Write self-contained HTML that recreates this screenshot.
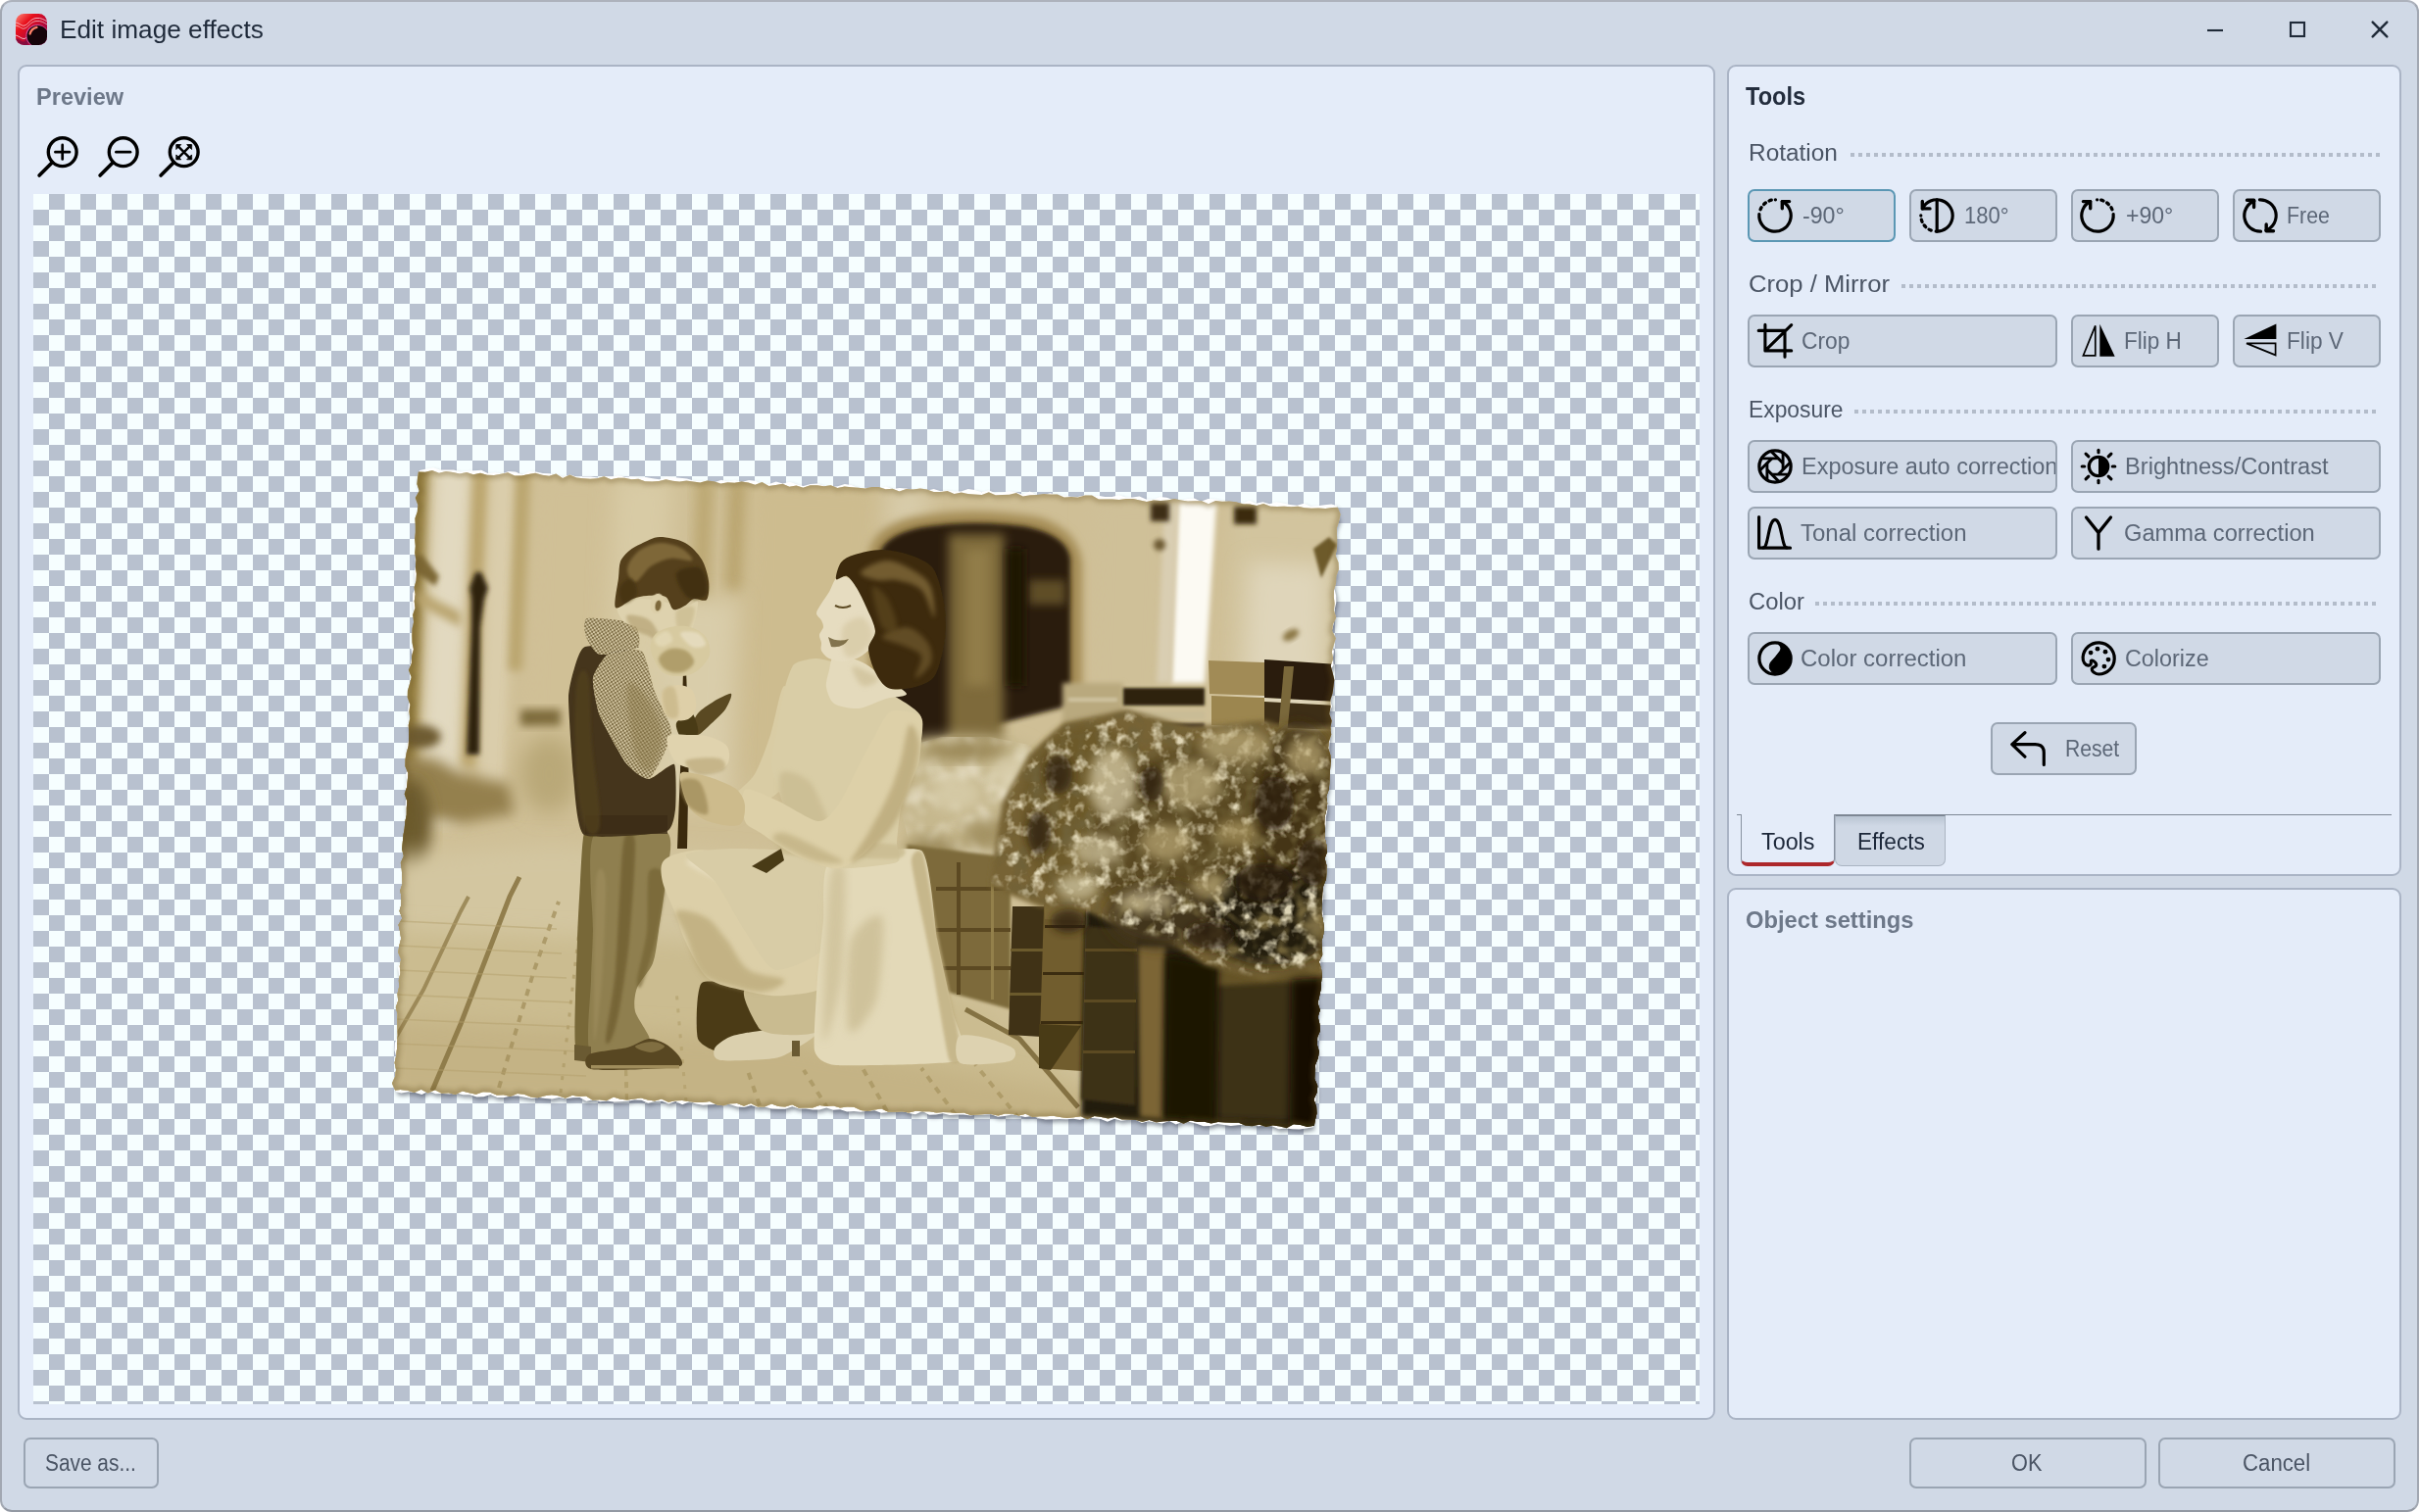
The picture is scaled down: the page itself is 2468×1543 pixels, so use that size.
<!DOCTYPE html>
<html><head><meta charset="utf-8"><title>Edit image effects</title>
<style>
html,body{margin:0;padding:0;background:#fff;}
body{width:2468px;height:1543px;position:relative;overflow:hidden;font-family:"Liberation Sans",sans-serif;}
.a{position:absolute;box-sizing:border-box;}
.t{position:absolute;white-space:nowrap;line-height:1;transform-origin:0 50%;}
#win{left:0;top:0;width:2468px;height:1543px;background:#d0d9e6;border-radius:12px;border:2px solid #a2a8b2;border-top-color:#adb2bc;border-bottom-color:#9399a3;overflow:hidden;}
.panel{background:#e4ecf9;border:2px solid #aab4c5;border-radius:9px;}
.btn{background:#d0d9e6;border:2px solid #9aa5b3;border-radius:7px;overflow:hidden;}
.btn.focus{border-color:#5b97b4;}
.dots{height:4px;background:repeating-linear-gradient(90deg,#b3bcca 0 4px,transparent 4px 8px);}
#checker{left:34px;top:198px;width:1700px;height:1235px;background:repeating-conic-gradient(#b8c1cf 0 25%,#f6feff 0 50%) 0 0/32px 32px;overflow:hidden;}
svg{position:absolute;overflow:visible;}
</style></head>
<body>
<div class="a" id="win"></div>
<svg style="left:16px;top:14px" width="32" height="32" viewBox="0 0 32 32"><defs><linearGradient id="ig" x1="0" y1="0" x2="1" y2="1"><stop offset="0" stop-color="#ff8a7a"/><stop offset="0.3" stop-color="#e8101c"/><stop offset="0.65" stop-color="#b00a3c"/><stop offset="1" stop-color="#6a0a3a"/></linearGradient><clipPath id="ic"><rect x="0" y="0" width="32" height="32" rx="8.5"/></clipPath></defs><g clip-path="url(#ic)"><rect width="32" height="32" fill="url(#ig)"/><path d="M0 9C5 10 6 13 9 12C13 11 15 5 21 4.5C26 4 29 6 32 8" fill="none" stroke="#ffd0d8" stroke-width="0.9" opacity="0.9"/><path d="M0 12C5 13 6 16 9 15C13 14 15 8 21 7.5C26 7 29 9 32 11" fill="none" stroke="#fff" stroke-width="0.8" opacity="0.7"/><path d="M0 22C4 23 6 26 9 25.5C11 25 12 23 13 21" fill="none" stroke="#ffe0e8" stroke-width="0.9" opacity="0.9"/><path d="M0 25C4 26 6 29 9 28.5L13 24L12 32H0Z" fill="#7a0d40" opacity="0.8"/><circle cx="22" cy="22.5" r="11.6" fill="#d84a98"/><circle cx="22.4" cy="22.8" r="10.9" fill="#16040a"/><path d="M14.6 20.5C15.5 17 18 14.6 21.5 13.8" fill="none" stroke="#ff8068" stroke-width="2.3" stroke-linecap="round"/></g></svg>
<span class="t" id="title" style="left:60.60px;top:17.40px;font-size:26.45px;color:#1f2a3a;transform:scaleX(0.9911);">Edit image effects</span>
<svg style="left:2240px;top:15px" width="210" height="32" viewBox="2240 15 210 32"><g stroke="#1f2a38" stroke-width="2.1" fill="none"><path d="M2252 31H2268" /><rect x="2337" y="23" width="14" height="14"/><path d="M2420.7 22.7L2435.3 37.3M2435.3 22.7L2420.7 37.3" stroke-linecap="round" stroke-width="2.5"/></g></svg>
<div class="a panel" style="left:18px;top:66px;width:1732px;height:1383px"></div>
<div class="a panel" style="left:1762px;top:66px;width:688px;height:828px"></div>
<div class="a panel" style="left:1762px;top:906px;width:688px;height:543px"></div>
<span class="t" id="preview" style="left:37.10px;top:86.68px;font-size:23.88px;color:#6d7889;font-weight:bold;transform:scaleX(0.9868);">Preview</span>
<span class="t" id="objset" style="left:1780.50px;top:926.58px;font-size:23.88px;color:#6d7889;font-weight:bold;transform:scaleX(0.9939);">Object settings</span>
<span class="t" id="toolsH" style="left:1781.00px;top:85.83px;font-size:25.00px;color:#232d3d;font-weight:bold;transform:scaleX(0.9421);">Tools</span>
<svg style="left:30px;top:130px" width="200" height="60" viewBox="30 130 200 60"><g fill="none" stroke="#000" stroke-linecap="round" stroke-linejoin="round"><circle cx="63.7" cy="155.2" r="14.4" stroke-width="3.4"/><path d="M53.300000000000004 165.79999999999998L40.1 179.0" stroke-width="3.7"/><path d="M56.400000000000006 155.2H71.0M63.7 147.89999999999998V162.5" stroke-width="2.7"/><circle cx="125.7" cy="155.2" r="14.4" stroke-width="3.4"/><path d="M115.3 165.79999999999998L102.1 179.0" stroke-width="3.7"/><path d="M118.4 155.2H133.0" stroke-width="2.7"/><circle cx="187.7" cy="155.2" r="14.4" stroke-width="3.4"/><path d="M177.29999999999998 165.79999999999998L164.1 179.0" stroke-width="3.7"/><path d="M181.1 148.6L194.29999999999998 161.79999999999998M194.29999999999998 148.6L181.1 161.79999999999998" stroke-width="2.4"/><path d="M180.1 147.6L184.7 147.6L180.1 152.2Z" fill="#000" stroke-width="0.9"/><path d="M195.29999999999998 147.6L190.7 147.6L195.29999999999998 152.2Z" fill="#000" stroke-width="0.9"/><path d="M195.29999999999998 162.79999999999998L190.7 162.79999999999998L195.29999999999998 158.2Z" fill="#000" stroke-width="0.9"/><path d="M180.1 162.79999999999998L184.7 162.79999999999998L180.1 158.2Z" fill="#000" stroke-width="0.9"/></g></svg>
<div class="a" id="checker"><svg style="left:0;top:0" width="1700" height="1235" viewBox="34 198 1700 1235"><defs><filter id="b1" x="-30%" y="-30%" width="160%" height="160%"><feGaussianBlur stdDeviation="0.7"/></filter><filter id="b2" x="-30%" y="-30%" width="160%" height="160%"><feGaussianBlur stdDeviation="1.6"/></filter><filter id="b3" x="-30%" y="-30%" width="160%" height="160%"><feGaussianBlur stdDeviation="2.6"/></filter><filter id="b4" x="-30%" y="-30%" width="160%" height="160%"><feGaussianBlur stdDeviation="4"/></filter><filter id="b5" x="-30%" y="-30%" width="160%" height="160%"><feGaussianBlur stdDeviation="5.5"/></filter><filter id="b6" x="-30%" y="-30%" width="160%" height="160%"><feGaussianBlur stdDeviation="7"/></filter><filter id="b8" x="-30%" y="-30%" width="160%" height="160%"><feGaussianBlur stdDeviation="11"/></filter><filter id="leaf" x="0" y="0" width="100%" height="100%"><feTurbulence type="fractalNoise" baseFrequency="0.075" numOctaves="3" seed="4"/><feColorMatrix type="matrix" values="0 0 0 0 0.80  0 0 0 0 0.73  0 0 0 0 0.52  3.2 0 0 0 -1.58"/></filter><filter id="leafd" x="0" y="0" width="100%" height="100%"><feTurbulence type="fractalNoise" baseFrequency="0.06" numOctaves="2" seed="9"/><feColorMatrix type="matrix" values="0 0 0 0 0.16  0 0 0 0 0.12  0 0 0 0 0.04  0 3.4 0 0 -1.55"/></filter><filter id="leafb" x="0" y="0" width="100%" height="100%"><feTurbulence type="fractalNoise" baseFrequency="0.05" numOctaves="2" seed="21"/><feColorMatrix type="matrix" values="0 0 0 0 0.88  0 0 0 0 0.83  0 0 0 0 0.68  2.2 0 0 0 -0.95"/><feGaussianBlur stdDeviation="2"/></filter><clipPath id="folb"><path d="M925 762L960 752L1010 752L1050 760L1070 790L1060 850L1015 880L960 888L930 872L918 820Z"/></clipPath><mask id="folmask" maskUnits="userSpaceOnUse" x="990" y="700" width="400" height="330"><path d="M1014 900L1026 822L1053 773L1087 742L1150 728L1215 746L1290 739L1330 752L1372 744L1372 996L1330 986L1290 996L1230 981L1190 956L1150 946L1110 926L1062 921Z" fill="#fff" filter="url(#b3)"/></mask><clipPath id="folclip"><path d="M1010 905L1022 820L1050 770L1085 738L1150 724L1215 742L1290 735L1330 748L1368 740L1368 1000L1330 990L1290 1000L1230 985L1190 960L1150 950L1110 930L1060 925Z"/></clipPath><pattern id="chk" width="4" height="4" patternUnits="userSpaceOnUse" patternTransform="rotate(12)"><rect width="4" height="4" fill="#efe6cc"/><rect width="2" height="2" fill="#4a3a18"/><rect x="2" y="2" width="2" height="2" fill="#4a3a18"/></pattern><clipPath id="ph"><polygon points="426.9,481.5 433.9,481.8 441.0,479.9 448.0,482.7 455.0,481.0 462.0,482.0 469.0,483.6 476.1,481.9 483.0,484.3 490.1,482.8 497.0,484.7 504.0,484.9 511.1,483.7 518.2,482.2 525.1,485.6 532.1,485.4 539.2,483.9 546.2,482.8 553.2,484.7 560.2,485.8 567.3,483.5 574.1,487.9 581.3,484.6 588.2,487.4 595.2,488.3 602.2,488.7 609.2,488.2 616.3,486.2 623.2,489.3 630.3,487.8 637.3,487.8 644.3,489.3 651.3,488.8 658.2,491.2 665.2,491.5 672.3,491.1 679.4,489.3 686.3,490.7 693.3,491.5 700.4,490.6 707.4,491.5 714.3,492.4 721.4,490.5 728.4,491.2 735.4,493.5 742.4,492.3 749.4,492.8 756.5,491.6 763.5,492.5 770.4,494.7 777.5,492.0 784.4,496.0 791.5,495.0 798.5,493.8 805.4,496.7 812.5,495.5 819.4,497.8 826.6,495.3 833.6,495.2 840.6,496.3 847.6,495.2 854.5,498.0 861.6,496.6 868.6,497.3 875.6,497.7 882.6,498.5 889.7,497.1 896.7,496.9 903.6,499.3 910.7,498.7 917.6,501.6 924.7,499.1 931.7,499.6 938.8,498.4 945.7,499.4 952.7,502.1 959.7,501.9 966.7,500.9 973.6,504.1 980.7,502.4 987.7,504.0 994.7,504.5 1001.7,505.0 1008.8,502.2 1015.7,505.3 1022.7,505.0 1029.8,504.7 1036.9,502.9 1043.7,506.6 1050.8,505.3 1057.8,505.1 1064.9,503.9 1071.9,504.5 1078.9,504.6 1085.8,507.4 1092.9,507.1 1099.9,507.6 1107.0,505.6 1114.0,505.6 1120.9,509.4 1127.9,509.6 1134.9,509.6 1141.9,509.9 1149.0,509.1 1156.0,508.9 1162.9,510.6 1169.9,512.0 1177.0,510.5 1184.0,511.0 1191.0,510.4 1198.1,509.0 1205.1,510.4 1212.0,511.5 1219.1,511.3 1226.1,511.3 1233.0,514.3 1240.1,510.9 1247.1,511.7 1254.2,511.6 1261.2,512.2 1268.1,514.3 1275.1,514.5 1282.1,516.1 1289.2,514.0 1296.1,516.8 1303.1,517.1 1310.1,516.8 1317.1,517.2 1324.2,516.7 1331.1,518.3 1338.1,518.8 1345.2,518.4 1352.2,518.9 1359.2,518.0 1364.7,517.7 1367.6,524.8 1366.2,531.8 1363.9,538.7 1364.0,545.8 1364.2,552.8 1364.0,559.9 1362.6,566.9 1365.5,574.0 1365.9,581.1 1363.3,588.0 1363.1,595.0 1361.0,602.0 1360.8,609.0 1361.6,616.1 1361.0,623.1 1363.2,630.2 1360.0,637.1 1359.1,644.1 1362.9,651.3 1360.7,658.3 1358.8,665.2 1360.2,672.3 1357.7,679.3 1359.6,686.4 1361.3,693.5 1360.5,700.5 1359.5,707.5 1357.3,714.5 1357.5,721.5 1356.3,728.5 1358.7,735.6 1357.4,742.6 1358.2,749.7 1355.9,756.6 1355.1,763.6 1357.5,770.8 1357.9,777.8 1357.1,784.8 1356.6,791.9 1356.4,798.9 1355.7,805.9 1353.2,812.8 1354.2,819.9 1353.2,826.9 1351.5,833.9 1351.2,840.9 1352.0,848.0 1351.6,855.0 1353.3,862.1 1354.1,869.2 1351.6,876.1 1353.5,883.2 1353.4,890.3 1353.0,897.3 1350.1,904.2 1349.2,911.2 1349.0,918.3 1348.5,925.3 1348.3,932.3 1349.9,939.4 1350.8,946.5 1350.2,953.5 1348.4,960.5 1348.9,967.5 1349.2,974.6 1345.8,981.5 1348.0,988.6 1348.9,995.7 1348.0,1002.7 1347.6,1009.7 1346.1,1016.7 1344.5,1023.7 1346.9,1030.8 1344.6,1037.7 1346.4,1044.9 1346.9,1051.9 1344.1,1058.8 1343.8,1065.9 1345.9,1073.0 1344.7,1080.0 1341.9,1086.9 1341.5,1093.9 1341.3,1101.0 1344.3,1108.1 1343.6,1115.1 1340.4,1122.0 1343.1,1129.2 1343.5,1136.2 1341.8,1143.2 1340.9,1148.7 1333.8,1150.1 1326.9,1148.0 1319.9,1147.2 1312.7,1151.2 1305.8,1149.5 1298.8,1148.6 1291.7,1150.1 1284.8,1147.7 1277.7,1149.3 1270.7,1148.8 1263.8,1145.8 1256.8,1145.7 1249.8,1145.6 1242.8,1145.1 1235.7,1146.4 1228.7,1144.7 1221.7,1145.1 1214.7,1143.5 1207.6,1146.7 1200.7,1143.9 1193.7,1144.1 1186.6,1144.4 1179.6,1145.5 1172.6,1143.1 1165.5,1145.0 1158.6,1142.9 1151.6,1142.8 1144.6,1142.4 1137.7,1139.9 1130.6,1141.5 1123.6,1140.1 1116.6,1139.0 1109.5,1142.2 1102.6,1139.2 1095.5,1140.2 1088.5,1141.1 1081.5,1140.0 1074.5,1138.8 1067.5,1139.3 1060.5,1139.2 1053.4,1139.9 1046.5,1136.7 1039.4,1138.4 1032.5,1136.7 1025.5,1136.6 1018.4,1138.5 1011.4,1137.0 1004.4,1137.0 997.3,1137.6 990.3,1138.0 983.4,1135.6 976.3,1136.1 969.3,1135.3 962.3,1135.1 955.3,1135.6 948.3,1134.2 941.3,1134.3 934.3,1133.8 927.2,1135.5 920.2,1134.2 913.2,1134.7 906.2,1134.7 899.3,1131.4 892.2,1132.5 885.2,1133.9 878.2,1133.1 871.3,1129.8 864.3,1129.4 857.2,1130.5 850.3,1128.6 843.2,1129.1 836.2,1128.1 829.1,1130.4 822.1,1130.6 815.1,1130.8 808.2,1127.3 801.1,1129.5 794.1,1129.0 787.2,1126.4 780.0,1129.4 773.0,1129.5 766.1,1125.9 759.0,1128.8 752.1,1126.1 745.1,1126.2 738.0,1128.2 731.0,1127.2 724.1,1124.0 717.0,1124.9 710.0,1124.9 703.0,1123.9 696.0,1123.0 689.0,1123.2 681.9,1124.7 675.0,1121.4 667.9,1123.4 661.0,1122.6 654.0,1120.5 647.0,1121.6 639.9,1122.6 632.9,1121.8 626.0,1119.6 618.8,1123.3 611.8,1122.2 604.8,1122.7 597.9,1118.6 590.9,1119.1 583.9,1117.8 576.8,1120.8 569.9,1118.2 562.9,1117.3 555.8,1118.3 548.7,1120.2 541.7,1119.5 534.8,1116.8 527.8,1116.0 520.7,1119.1 513.7,1117.3 506.7,1117.6 499.8,1114.6 492.8,1114.2 485.7,1116.7 478.7,1115.3 471.8,1113.4 464.6,1117.0 457.6,1115.3 450.6,1115.8 443.7,1112.3 436.6,1115.5 429.7,1111.7 422.6,1114.9 415.6,1112.8 408.6,1112.1 403.1,1112.6 400.0,1105.4 403.2,1098.5 404.1,1091.5 402.6,1084.4 404.2,1077.4 405.0,1070.4 405.1,1063.4 405.8,1056.3 405.4,1049.3 405.2,1042.2 405.6,1035.2 403.8,1028.1 406.2,1021.2 405.5,1014.1 407.2,1007.1 406.8,1000.1 408.5,993.1 407.8,986.0 409.1,979.0 406.2,971.9 407.3,964.9 409.2,957.9 408.2,950.9 406.5,943.7 410.4,936.9 407.5,929.7 409.5,922.8 409.5,915.7 408.3,908.6 410.5,901.7 410.3,894.6 409.8,887.6 408.8,880.5 411.9,873.6 410.0,866.5 410.8,859.5 411.4,852.4 412.7,845.5 413.3,838.4 414.8,831.5 414.8,824.4 415.3,817.4 412.7,810.3 415.1,803.3 415.8,796.3 416.4,789.3 413.4,782.1 413.5,775.1 414.7,768.1 416.7,761.1 417.1,754.1 417.2,747.1 416.7,740.0 418.3,733.1 417.4,726.0 418.4,719.0 415.7,711.8 415.9,704.8 418.0,697.8 419.7,690.9 416.8,683.7 419.9,676.8 420.0,669.8 421.9,662.8 420.5,655.7 420.3,648.7 420.5,641.6 422.1,634.7 421.1,627.6 423.5,620.6 422.7,613.6 423.7,606.6 422.6,599.5 424.5,592.5 424.9,585.5 423.9,578.4 424.5,571.4 423.2,564.3 423.8,557.3 423.1,550.2 423.8,543.2 423.8,536.2 423.4,529.1 425.8,522.2 426.4,515.2 423.7,508.0 427.7,501.1 425.4,494.0 426.1,487.0"/></clipPath><filter id="sh" x="-5%" y="-5%" width="110%" height="110%"><feGaussianBlur stdDeviation="2.2"/></filter></defs><polygon points="428.0,479.9 435.1,478.5 442.1,477.3 449.0,479.4 456.0,479.5 463.0,479.5 470.0,481.4 477.0,480.4 484.0,480.2 491.1,479.8 497.9,482.9 505.0,482.3 511.9,483.4 519.0,480.9 526.0,481.6 532.9,484.5 540.1,481.0 547.0,481.4 554.0,482.9 561.0,483.3 567.9,485.4 574.9,486.3 581.9,484.5 588.9,486.7 595.9,486.4 602.9,486.5 609.8,487.6 616.9,486.2 623.9,486.5 631.0,485.2 637.9,486.8 644.9,486.6 651.9,487.4 658.9,487.1 665.9,488.2 672.8,489.2 679.9,486.6 686.9,486.9 693.9,487.8 700.9,488.6 707.8,490.4 714.8,491.0 721.8,491.1 728.8,492.2 735.9,489.7 742.8,491.5 749.9,490.0 756.8,492.1 763.9,490.1 770.8,490.8 777.7,494.5 784.7,493.9 791.8,491.4 798.8,493.5 805.8,491.7 812.7,494.3 819.7,495.9 826.8,493.9 833.8,493.6 840.7,495.9 847.7,496.9 854.7,496.2 861.8,494.0 868.7,495.1 875.6,497.9 882.7,497.7 889.6,498.6 896.6,499.0 903.7,496.4 910.6,499.1 917.7,497.9 924.7,498.6 931.6,499.9 938.7,498.0 945.6,500.7 952.7,498.9 959.6,501.3 966.6,500.4 973.6,501.5 980.6,501.6 987.7,499.0 994.7,500.0 1001.6,502.3 1008.7,500.2 1015.5,503.2 1022.6,502.7 1029.6,501.2 1036.6,502.3 1043.5,504.8 1050.6,501.5 1057.5,504.9 1064.5,505.0 1071.6,503.2 1078.5,505.3 1085.5,505.7 1092.5,506.8 1099.5,507.0 1106.5,505.4 1113.5,507.0 1120.5,505.8 1127.5,507.0 1134.5,507.0 1141.6,505.3 1148.5,507.4 1155.5,507.4 1162.5,506.5 1169.4,509.5 1176.4,509.9 1183.5,507.1 1190.5,507.8 1197.4,510.3 1204.4,510.9 1211.5,508.9 1218.5,508.4 1225.4,511.7 1232.5,508.9 1239.5,509.5 1246.4,510.9 1253.4,511.9 1260.3,513.5 1267.3,514.0 1274.5,510.6 1281.3,513.8 1288.4,512.2 1295.3,514.2 1302.4,512.3 1309.4,513.5 1316.3,514.9 1323.3,515.7 1330.4,513.8 1337.3,516.7 1344.3,516.3 1351.3,515.3 1358.4,514.4 1363.8,516.0 1364.1,523.1 1366.4,530.3 1363.3,537.2 1362.2,544.3 1363.0,551.4 1363.4,558.5 1361.6,565.5 1361.7,572.5 1362.2,579.6 1362.8,586.7 1360.7,593.7 1361.4,600.8 1363.2,608.0 1363.3,615.0 1361.7,622.1 1361.5,629.1 1360.8,636.2 1358.8,643.2 1358.1,650.2 1357.7,657.3 1361.0,664.5 1359.9,671.5 1360.6,678.6 1356.6,685.5 1358.8,692.7 1357.9,699.7 1358.6,706.8 1356.6,713.8 1359.1,721.0 1355.1,727.9 1356.7,735.1 1357.2,742.1 1357.5,749.2 1356.6,756.3 1356.2,763.3 1356.3,770.4 1356.5,777.5 1353.9,784.5 1355.0,791.6 1355.6,798.7 1355.2,805.7 1353.1,812.7 1354.3,819.8 1354.3,826.9 1352.8,833.9 1352.8,841.0 1351.5,848.0 1352.0,855.1 1351.8,862.2 1349.4,869.2 1351.4,876.3 1352.5,883.5 1351.8,890.5 1350.9,897.5 1349.3,904.5 1350.4,911.7 1349.5,918.7 1348.6,925.7 1349.9,932.9 1346.6,939.8 1349.0,947.0 1345.8,953.9 1347.8,961.1 1347.1,968.1 1345.8,975.1 1347.4,982.3 1346.3,989.3 1346.5,996.4 1347.4,1003.5 1344.5,1010.5 1343.2,1017.5 1344.1,1024.6 1345.3,1031.7 1343.1,1038.7 1342.7,1045.8 1345.4,1053.0 1344.1,1060.0 1342.9,1067.0 1344.5,1074.1 1341.9,1081.1 1343.0,1088.2 1340.8,1095.2 1341.5,1102.3 1342.7,1109.4 1342.8,1116.5 1342.4,1123.6 1340.2,1130.6 1340.7,1137.7 1339.3,1144.7 1339.8,1150.3 1332.8,1151.5 1325.7,1152.6 1318.7,1152.3 1311.8,1151.5 1304.7,1152.2 1297.8,1149.2 1290.9,1148.5 1283.8,1149.3 1276.9,1148.3 1269.9,1147.8 1262.9,1148.3 1255.8,1148.9 1248.9,1148.1 1241.9,1147.1 1234.8,1148.9 1227.8,1149.2 1220.9,1146.8 1213.9,1145.0 1207.0,1144.6 1199.8,1147.6 1193.0,1144.0 1185.9,1146.4 1178.9,1145.6 1171.9,1144.3 1164.9,1145.9 1158.0,1142.5 1151.0,1142.7 1143.9,1143.7 1137.0,1141.7 1129.9,1144.7 1123.0,1142.0 1116.0,1141.3 1109.0,1140.7 1101.9,1142.7 1095.0,1141.7 1088.0,1142.2 1081.0,1142.0 1073.9,1142.3 1066.9,1142.6 1060.0,1141.3 1053.1,1139.1 1046.0,1139.9 1039.1,1138.4 1032.1,1137.5 1025.0,1139.0 1018.0,1139.7 1011.1,1137.3 1004.1,1137.4 997.1,1137.4 990.0,1138.5 983.1,1137.5 976.1,1137.6 969.0,1137.9 962.1,1136.2 955.0,1137.5 948.0,1137.7 941.2,1134.1 934.0,1137.2 927.1,1136.1 920.2,1133.4 913.1,1134.5 906.1,1134.9 899.1,1135.7 892.2,1133.3 885.1,1133.8 878.1,1134.7 871.1,1134.1 864.1,1134.4 857.2,1132.2 850.1,1132.7 843.2,1130.6 836.1,1132.4 829.1,1132.5 822.2,1131.6 815.2,1131.6 808.3,1129.3 801.1,1131.7 794.1,1131.8 787.1,1131.5 780.2,1129.4 773.2,1130.2 766.3,1128.0 759.2,1130.1 752.2,1129.6 745.3,1127.3 738.3,1125.9 731.3,1127.1 724.3,1127.3 717.2,1127.8 710.3,1126.4 703.4,1124.3 696.2,1127.2 689.4,1123.9 682.3,1126.6 675.4,1123.8 668.3,1124.1 661.3,1125.7 654.4,1122.8 647.4,1122.6 640.3,1123.7 633.3,1124.3 626.3,1124.5 619.3,1123.6 612.3,1124.3 605.4,1122.2 598.3,1123.8 591.4,1120.1 584.4,1120.3 577.4,1121.3 570.4,1120.0 563.4,1121.5 556.4,1120.9 549.4,1120.1 542.4,1121.1 535.4,1119.7 528.5,1118.4 521.5,1118.4 514.4,1120.0 507.4,1119.9 500.5,1116.9 493.4,1119.2 486.4,1119.4 479.5,1117.3 472.5,1117.2 465.5,1115.5 458.5,1116.5 451.5,1116.1 444.5,1116.2 437.6,1113.6 430.4,1117.1 423.5,1115.0 416.5,1114.3 409.5,1115.6 404.0,1114.2 402.9,1107.1 402.3,1100.0 405.1,1093.0 403.5,1085.9 404.3,1078.8 402.4,1071.7 402.8,1064.6 405.7,1057.7 405.2,1050.6 406.9,1043.6 405.9,1036.4 404.7,1029.3 404.6,1022.2 406.6,1015.2 407.5,1008.2 408.3,1001.2 406.9,994.0 405.9,986.9 409.4,980.0 407.1,972.8 410.4,965.9 410.0,958.8 410.1,951.7 408.6,944.6 410.3,937.6 410.5,930.5 409.7,923.4 412.1,916.4 409.8,909.3 412.5,902.3 411.3,895.2 412.6,888.1 413.1,881.1 412.1,874.0 412.7,866.9 413.2,859.9 413.4,852.8 413.2,845.7 415.0,838.7 415.1,831.6 413.6,824.5 413.9,817.5 414.6,810.4 413.6,803.3 414.9,796.3 414.2,789.2 416.9,782.2 415.2,775.1 415.2,768.0 415.1,760.9 417.7,753.9 418.0,746.9 415.9,739.7 419.0,732.8 416.1,725.6 416.9,718.5 420.2,711.6 420.0,704.5 418.4,697.4 420.5,690.4 421.4,683.3 418.8,676.2 420.7,669.2 419.5,662.0 422.5,655.1 421.6,648.0 420.8,640.9 423.7,633.9 423.3,626.8 421.7,619.7 421.0,612.6 421.1,605.5 424.8,598.6 423.5,591.5 422.8,584.3 424.1,577.3 423.6,570.2 425.9,563.2 426.7,556.2 426.8,549.1 427.4,542.1 425.6,534.9 426.0,527.9 426.1,520.8 428.1,513.8 428.2,506.7 428.4,499.7 426.1,492.5 425.8,485.4" fill="#3a4150" opacity="0.55" filter="url(#sh)" transform="translate(1.5 3)"/><polygon points="428.0,479.9 435.1,478.5 442.1,477.3 449.0,479.4 456.0,479.5 463.0,479.5 470.0,481.4 477.0,480.4 484.0,480.2 491.1,479.8 497.9,482.9 505.0,482.3 511.9,483.4 519.0,480.9 526.0,481.6 532.9,484.5 540.1,481.0 547.0,481.4 554.0,482.9 561.0,483.3 567.9,485.4 574.9,486.3 581.9,484.5 588.9,486.7 595.9,486.4 602.9,486.5 609.8,487.6 616.9,486.2 623.9,486.5 631.0,485.2 637.9,486.8 644.9,486.6 651.9,487.4 658.9,487.1 665.9,488.2 672.8,489.2 679.9,486.6 686.9,486.9 693.9,487.8 700.9,488.6 707.8,490.4 714.8,491.0 721.8,491.1 728.8,492.2 735.9,489.7 742.8,491.5 749.9,490.0 756.8,492.1 763.9,490.1 770.8,490.8 777.7,494.5 784.7,493.9 791.8,491.4 798.8,493.5 805.8,491.7 812.7,494.3 819.7,495.9 826.8,493.9 833.8,493.6 840.7,495.9 847.7,496.9 854.7,496.2 861.8,494.0 868.7,495.1 875.6,497.9 882.7,497.7 889.6,498.6 896.6,499.0 903.7,496.4 910.6,499.1 917.7,497.9 924.7,498.6 931.6,499.9 938.7,498.0 945.6,500.7 952.7,498.9 959.6,501.3 966.6,500.4 973.6,501.5 980.6,501.6 987.7,499.0 994.7,500.0 1001.6,502.3 1008.7,500.2 1015.5,503.2 1022.6,502.7 1029.6,501.2 1036.6,502.3 1043.5,504.8 1050.6,501.5 1057.5,504.9 1064.5,505.0 1071.6,503.2 1078.5,505.3 1085.5,505.7 1092.5,506.8 1099.5,507.0 1106.5,505.4 1113.5,507.0 1120.5,505.8 1127.5,507.0 1134.5,507.0 1141.6,505.3 1148.5,507.4 1155.5,507.4 1162.5,506.5 1169.4,509.5 1176.4,509.9 1183.5,507.1 1190.5,507.8 1197.4,510.3 1204.4,510.9 1211.5,508.9 1218.5,508.4 1225.4,511.7 1232.5,508.9 1239.5,509.5 1246.4,510.9 1253.4,511.9 1260.3,513.5 1267.3,514.0 1274.5,510.6 1281.3,513.8 1288.4,512.2 1295.3,514.2 1302.4,512.3 1309.4,513.5 1316.3,514.9 1323.3,515.7 1330.4,513.8 1337.3,516.7 1344.3,516.3 1351.3,515.3 1358.4,514.4 1363.8,516.0 1364.1,523.1 1366.4,530.3 1363.3,537.2 1362.2,544.3 1363.0,551.4 1363.4,558.5 1361.6,565.5 1361.7,572.5 1362.2,579.6 1362.8,586.7 1360.7,593.7 1361.4,600.8 1363.2,608.0 1363.3,615.0 1361.7,622.1 1361.5,629.1 1360.8,636.2 1358.8,643.2 1358.1,650.2 1357.7,657.3 1361.0,664.5 1359.9,671.5 1360.6,678.6 1356.6,685.5 1358.8,692.7 1357.9,699.7 1358.6,706.8 1356.6,713.8 1359.1,721.0 1355.1,727.9 1356.7,735.1 1357.2,742.1 1357.5,749.2 1356.6,756.3 1356.2,763.3 1356.3,770.4 1356.5,777.5 1353.9,784.5 1355.0,791.6 1355.6,798.7 1355.2,805.7 1353.1,812.7 1354.3,819.8 1354.3,826.9 1352.8,833.9 1352.8,841.0 1351.5,848.0 1352.0,855.1 1351.8,862.2 1349.4,869.2 1351.4,876.3 1352.5,883.5 1351.8,890.5 1350.9,897.5 1349.3,904.5 1350.4,911.7 1349.5,918.7 1348.6,925.7 1349.9,932.9 1346.6,939.8 1349.0,947.0 1345.8,953.9 1347.8,961.1 1347.1,968.1 1345.8,975.1 1347.4,982.3 1346.3,989.3 1346.5,996.4 1347.4,1003.5 1344.5,1010.5 1343.2,1017.5 1344.1,1024.6 1345.3,1031.7 1343.1,1038.7 1342.7,1045.8 1345.4,1053.0 1344.1,1060.0 1342.9,1067.0 1344.5,1074.1 1341.9,1081.1 1343.0,1088.2 1340.8,1095.2 1341.5,1102.3 1342.7,1109.4 1342.8,1116.5 1342.4,1123.6 1340.2,1130.6 1340.7,1137.7 1339.3,1144.7 1339.8,1150.3 1332.8,1151.5 1325.7,1152.6 1318.7,1152.3 1311.8,1151.5 1304.7,1152.2 1297.8,1149.2 1290.9,1148.5 1283.8,1149.3 1276.9,1148.3 1269.9,1147.8 1262.9,1148.3 1255.8,1148.9 1248.9,1148.1 1241.9,1147.1 1234.8,1148.9 1227.8,1149.2 1220.9,1146.8 1213.9,1145.0 1207.0,1144.6 1199.8,1147.6 1193.0,1144.0 1185.9,1146.4 1178.9,1145.6 1171.9,1144.3 1164.9,1145.9 1158.0,1142.5 1151.0,1142.7 1143.9,1143.7 1137.0,1141.7 1129.9,1144.7 1123.0,1142.0 1116.0,1141.3 1109.0,1140.7 1101.9,1142.7 1095.0,1141.7 1088.0,1142.2 1081.0,1142.0 1073.9,1142.3 1066.9,1142.6 1060.0,1141.3 1053.1,1139.1 1046.0,1139.9 1039.1,1138.4 1032.1,1137.5 1025.0,1139.0 1018.0,1139.7 1011.1,1137.3 1004.1,1137.4 997.1,1137.4 990.0,1138.5 983.1,1137.5 976.1,1137.6 969.0,1137.9 962.1,1136.2 955.0,1137.5 948.0,1137.7 941.2,1134.1 934.0,1137.2 927.1,1136.1 920.2,1133.4 913.1,1134.5 906.1,1134.9 899.1,1135.7 892.2,1133.3 885.1,1133.8 878.1,1134.7 871.1,1134.1 864.1,1134.4 857.2,1132.2 850.1,1132.7 843.2,1130.6 836.1,1132.4 829.1,1132.5 822.2,1131.6 815.2,1131.6 808.3,1129.3 801.1,1131.7 794.1,1131.8 787.1,1131.5 780.2,1129.4 773.2,1130.2 766.3,1128.0 759.2,1130.1 752.2,1129.6 745.3,1127.3 738.3,1125.9 731.3,1127.1 724.3,1127.3 717.2,1127.8 710.3,1126.4 703.4,1124.3 696.2,1127.2 689.4,1123.9 682.3,1126.6 675.4,1123.8 668.3,1124.1 661.3,1125.7 654.4,1122.8 647.4,1122.6 640.3,1123.7 633.3,1124.3 626.3,1124.5 619.3,1123.6 612.3,1124.3 605.4,1122.2 598.3,1123.8 591.4,1120.1 584.4,1120.3 577.4,1121.3 570.4,1120.0 563.4,1121.5 556.4,1120.9 549.4,1120.1 542.4,1121.1 535.4,1119.7 528.5,1118.4 521.5,1118.4 514.4,1120.0 507.4,1119.9 500.5,1116.9 493.4,1119.2 486.4,1119.4 479.5,1117.3 472.5,1117.2 465.5,1115.5 458.5,1116.5 451.5,1116.1 444.5,1116.2 437.6,1113.6 430.4,1117.1 423.5,1115.0 416.5,1114.3 409.5,1115.6 404.0,1114.2 402.9,1107.1 402.3,1100.0 405.1,1093.0 403.5,1085.9 404.3,1078.8 402.4,1071.7 402.8,1064.6 405.7,1057.7 405.2,1050.6 406.9,1043.6 405.9,1036.4 404.7,1029.3 404.6,1022.2 406.6,1015.2 407.5,1008.2 408.3,1001.2 406.9,994.0 405.9,986.9 409.4,980.0 407.1,972.8 410.4,965.9 410.0,958.8 410.1,951.7 408.6,944.6 410.3,937.6 410.5,930.5 409.7,923.4 412.1,916.4 409.8,909.3 412.5,902.3 411.3,895.2 412.6,888.1 413.1,881.1 412.1,874.0 412.7,866.9 413.2,859.9 413.4,852.8 413.2,845.7 415.0,838.7 415.1,831.6 413.6,824.5 413.9,817.5 414.6,810.4 413.6,803.3 414.9,796.3 414.2,789.2 416.9,782.2 415.2,775.1 415.2,768.0 415.1,760.9 417.7,753.9 418.0,746.9 415.9,739.7 419.0,732.8 416.1,725.6 416.9,718.5 420.2,711.6 420.0,704.5 418.4,697.4 420.5,690.4 421.4,683.3 418.8,676.2 420.7,669.2 419.5,662.0 422.5,655.1 421.6,648.0 420.8,640.9 423.7,633.9 423.3,626.8 421.7,619.7 421.0,612.6 421.1,605.5 424.8,598.6 423.5,591.5 422.8,584.3 424.1,577.3 423.6,570.2 425.9,563.2 426.7,556.2 426.8,549.1 427.4,542.1 425.6,534.9 426.0,527.9 426.1,520.8 428.1,513.8 428.2,506.7 428.4,499.7 426.1,492.5 425.8,485.4" fill="#ffffff"/><g clip-path="url(#ph)"><polygon points="417.4,469.6 1376.6,508.1 1350.4,1160.6 391.2,1122.1" fill="#cfbf96"/><polygon points="443.2,475.6 481.2,477.2 466.5,841.9 428.5,840.4" fill="#e2d9c0" filter="url(#b6)"/><polygon points="483.2,477.3 499.1,477.9 486.9,782.6 470.9,782.0" fill="#bca66e" filter="url(#b4)"/><polygon points="501.1,478.0 527.1,479.0 513.3,823.7 487.3,822.7" fill="#dacdab" filter="url(#b5)"/><polygon points="527.1,479.0 543.1,479.7 534.9,684.5 518.9,683.9" fill="#b7a269" filter="url(#b4)"/><polygon points="545.1,479.7 627.0,483.0 613.6,817.8 531.7,814.5" fill="#d0c096" filter="url(#b8)"/><polygon points="627.0,483.0 687.0,485.4 673.5,820.2 613.6,817.8" fill="#d8cba5" filter="url(#b8)"/><polygon points="712.0,486.4 727.0,487.0 721.9,611.9 707.0,611.3" fill="#b39d62" filter="url(#b6)" opacity="0.8"/><polygon points="744.9,487.8 762.9,488.5 758.3,603.4 740.3,602.7" fill="#b09a5e" filter="url(#b6)" opacity="0.8"/><polygon points="766.9,488.6 896.8,493.9 884.6,798.6 754.7,793.4" fill="#cdbc8f" filter="url(#b8)"/><polygon points="672.0,609.9 751.9,613.1 743.5,823.0 663.6,819.8" fill="#d9cdaa" filter="url(#b8)"/><polygon points="906.8,494.3 946.8,495.9 936.5,750.7 896.6,749.1" fill="#d8ccaa" filter="url(#b8)"/><polygon points="1116.6,502.7 1196.6,505.9 1185.9,770.7 1106.0,767.5" fill="#cfc098" filter="url(#b8)"/><polygon points="1256.5,508.3 1376.4,513.1 1365.8,777.9 1245.9,773.1" fill="#d2c49e" filter="url(#b8)"/><polygon points="1273.9,574.1 1353.8,577.3 1347.0,747.1 1267.1,743.9" fill="#dfd5ba" filter="url(#b8)"/><polygon points="421.2,473.8 437.2,474.4 411.3,1118.9 395.4,1118.2" fill="#8f7838" filter="url(#b4)" opacity="0.9"/><polygon points="418.0,570.0 430.0,566.0 448.0,588.0 444.0,598.0 424.0,584.0" fill="#7d6736" filter="url(#b3)"/><polygon points="420.0,600.0 470.0,625.0 470.0,640.0 418.0,612.0" fill="#b9a46e" filter="url(#b4)"/><polygon points="485.0,584.0 491.0,584.0 498.0,600.0 494.0,612.0 490.0,640.0 489.0,770.0 476.0,770.0 481.0,640.0 481.0,612.0 479.0,600.0" fill="#2f230b" filter="url(#b3)"/><ellipse cx="428" cy="752" rx="22" ry="12" fill="#6e5c30" filter="url(#b4)"/><polygon points="405.0,770.0 445.0,775.0 470.0,790.0 520.0,800.0 525.0,830.0 470.0,840.0 440.0,835.0 404.0,860.0" fill="#94804e" filter="url(#b6)"/><ellipse cx="420" cy="845" rx="20" ry="50" fill="#6d5b2f" filter="url(#b6)"/><ellipse cx="415" cy="935" rx="14" ry="30" fill="#7a683a" filter="url(#b6)"/><polygon points="531.0,724.0 572.0,724.0 572.0,741.0 531.0,741.0" fill="#7d6a3a" filter="url(#b4)"/><ellipse cx="560" cy="790" rx="30" ry="40" fill="#b9a878" filter="url(#b8)"/><polygon points="401.2,874.3 560.0,862.0 690.0,868.0 800.0,880.0 960.0,1000.0 1080.0,1075.0 1160.0,1150.0 1350.4,1160.6 391.2,1122.1" fill="#d3c6a0" filter="url(#b8)"/><polygon points="398.1,949.2 700.0,960.0 1000.0,1020.0 1180.0,1160.0 391.2,1122.1" fill="#cbbc90" filter="url(#b8)"/><polygon points="394.5,1039.1 800.0,1060.0 1130.0,1120.0 1130.0,1160.0 391.2,1122.1" fill="#c4b385" filter="url(#b8)"/><path d="M441 1113L470 1045L520 915L530 895" fill="none" stroke="#8b7744" stroke-width="5" filter="url(#b1)" opacity="0.9"/><path d="M402 1062L432 1010L470 930L478 915" fill="none" stroke="#927e4c" stroke-width="4" filter="url(#b1)" opacity="0.8"/><path d="M509 1110L545 990L570 920" fill="none" stroke="#a08c58" stroke-width="4" filter="url(#b1)" opacity="0.7" stroke-dasharray="7 7"/><path d="M572 1115L585 1000L592 940" fill="none" stroke="#a8945f" stroke-width="3" filter="url(#b1)" opacity="0.6" stroke-dasharray="4 9"/><path d="M640 1122L638 1090" fill="none" stroke="#a8945f" stroke-width="4" filter="url(#b1)" opacity="0.6" stroke-dasharray="6 6"/><path d="M700 1124L690 1010" fill="none" stroke="#ab9862" stroke-width="3" filter="url(#b1)" opacity="0.5" stroke-dasharray="4 9"/><path d="M775 1128L762 1090M845 1132L820 1092M905 1134L880 1090M975 1138L940 1090M1040 1142L995 1086" fill="none" stroke="#a18d58" stroke-width="4" filter="url(#b1)" opacity="0.6" stroke-dasharray="7 7"/><path d="M1100 1130L1040 1060L985 1030" fill="none" stroke="#7d6a3a" stroke-width="5" filter="url(#b1)" opacity="0.9"/><path d="M407 940L568 948" fill="none" stroke="#b3a06c" stroke-width="1.5" opacity="0.5"/><path d="M406 965L573 973" fill="none" stroke="#b3a06c" stroke-width="1.5" opacity="0.5"/><path d="M405 990L578 998" fill="none" stroke="#b3a06c" stroke-width="1.5" opacity="0.5"/><path d="M404 1015L583 1023" fill="none" stroke="#b3a06c" stroke-width="1.5" opacity="0.5"/><path d="M403 1040L588 1048" fill="none" stroke="#b3a06c" stroke-width="1.5" opacity="0.5"/><path d="M402 1065L593 1073" fill="none" stroke="#b3a06c" stroke-width="1.5" opacity="0.5"/><path d="M401 1090L598 1098" fill="none" stroke="#b3a06c" stroke-width="1.5" opacity="0.5"/><path d="M886 760L886 566Q890 538 930 528Q990 516 1060 528Q1100 540 1104 575L1104 705L886 760Z" fill="#a48c54" filter="url(#b4)"/><path d="M897 770L897 566Q902 546 940 538Q990 530 1045 537Q1088 545 1092 570L1092 720L897 770Z" fill="#2a1e08" filter="url(#b3)"/><polygon points="968.0,545.0 1024.0,545.0 1024.0,760.0 968.0,760.0" fill="#7e6a3a" filter="url(#b5)"/><polygon points="985.0,560.0 1010.0,560.0 1010.0,700.0 985.0,700.0" fill="#9a8550" filter="url(#b5)" opacity="0.7"/><polygon points="1050.0,592.0 1087.0,592.0 1087.0,617.0 1050.0,617.0" fill="#5f4d27" filter="url(#b4)"/><polygon points="1028.0,560.0 1045.0,560.0 1045.0,700.0 1028.0,700.0" fill="#1c1405" filter="url(#b4)"/><polygon points="1202.0,512.0 1241.0,514.0 1229.0,697.0 1195.0,697.0" fill="#fcfaf3" filter="url(#b3)"/><polygon points="1188.0,512.0 1202.0,512.0 1195.0,697.0 1180.0,697.0" fill="#d9ceb2" filter="url(#b3)"/><polygon points="1174.0,513.0 1193.0,513.0 1193.0,532.0 1174.0,532.0" fill="#3d2e12" filter="url(#b3)"/><polygon points="1259.0,517.0 1282.0,517.0 1282.0,535.0 1259.0,535.0" fill="#3a2b10" filter="url(#b3)"/><ellipse cx="1183" cy="556" rx="6" ry="6" fill="#6a5830" filter="url(#b3)" transform="rotate(-30 1183 556)"/><ellipse cx="1317" cy="648" rx="9" ry="5" fill="#8c7846" filter="url(#b3)" transform="rotate(-30 1317 648)"/><path d="M1340 560L1356 548L1364 556L1348 590Z" fill="#6d5a2a" filter="url(#b2)"/><polygon points="1084.0,697.0 1146.0,697.0 1146.0,760.0 1084.0,760.0" fill="#b9a97e" filter="url(#b3)"/><polygon points="1090.0,712.0 1140.0,712.0 1140.0,716.0 1090.0,716.0" fill="#cfc3a0" filter="url(#b2)"/><polygon points="1146.0,702.0 1229.0,702.0 1229.0,720.0 1146.0,720.0" fill="#2e220c" filter="url(#b2)"/><polygon points="1146.0,726.0 1229.0,726.0 1229.0,734.0 1146.0,734.0" fill="#c9bc96" filter="url(#b2)"/><polygon points="1146.0,738.0 1229.0,738.0 1229.0,748.0 1146.0,748.0" fill="#3a2c12" filter="url(#b2)"/><polygon points="1233.0,674.0 1290.0,676.0 1290.0,710.0 1234.0,708.0" fill="#a18b56" filter="url(#b1)"/><polygon points="1290.0,673.0 1365.0,678.0 1364.0,716.0 1290.0,712.0" fill="#2a1e0a" filter="url(#b1)"/><polygon points="1236.0,710.0 1290.0,712.0 1290.0,742.0 1236.0,740.0" fill="#9c8650" filter="url(#b1)"/><polygon points="1290.0,716.0 1364.0,720.0 1364.0,745.0 1290.0,742.0" fill="#3d2e12" filter="url(#b1)"/><polygon points="1310.0,680.0 1320.0,680.0 1312.0,760.0 1303.0,760.0" fill="#7a683a" filter="url(#b1)"/><polygon points="1130.0,745.0 1365.0,745.0 1365.0,770.0 1130.0,770.0" fill="#c4b68e" filter="url(#b4)"/><path d="M925.0 762.0C932.0 750.7 945.8 753.7 960.0 752.0C974.2 750.3 995.0 750.7 1010.0 752.0C1025.0 753.3 1040.0 753.7 1050.0 760.0C1060.0 766.3 1068.3 775.0 1070.0 790.0C1071.7 805.0 1069.2 835.0 1060.0 850.0C1050.8 865.0 1031.7 873.7 1015.0 880.0C998.3 886.3 974.2 889.3 960.0 888.0C945.8 886.7 937.0 883.3 930.0 872.0C923.0 860.7 918.8 838.3 918.0 820.0C917.2 801.7 918.0 773.3 925.0 762.0Z" fill="#c6b88e" filter="url(#b6)"/><rect x="900" y="735" width="190" height="170" filter="url(#leafb)" clip-path="url(#folb)" opacity="0.9"/><ellipse cx="985" cy="766" rx="45" ry="10" fill="#8f7c4a" filter="url(#b6)" opacity="0.8"/><ellipse cx="950" cy="872" rx="28" ry="18" fill="#8f7c4a" filter="url(#b6)" opacity="0.8"/><ellipse cx="1012" cy="852" rx="30" ry="16" fill="#9c8a5a" filter="url(#b6)" opacity="0.8"/><ellipse cx="1040" cy="790" rx="28" ry="18" fill="#ddd3b2" filter="url(#b6)" opacity="0.8"/><ellipse cx="975" cy="810" rx="26" ry="18" fill="#d8cdaa" filter="url(#b6)" opacity="0.8"/><polygon points="925.0,862.0 1031.0,875.0 1031.0,1030.0 958.0,1010.0 940.0,930.0" fill="#7d6a3a" filter="url(#b2)"/><polygon points="955.0,905.0 1031.0,905.0 1031.0,909.0 955.0,909.0" fill="#5c4a22" filter="url(#b1)"/><polygon points="955.0,947.0 1031.0,947.0 1031.0,951.0 955.0,951.0" fill="#5c4a22" filter="url(#b1)"/><polygon points="955.0,986.0 1031.0,986.0 1031.0,990.0 955.0,990.0" fill="#5c4a22" filter="url(#b1)"/><polygon points="976.0,880.0 980.0,880.0 980.0,1015.0 976.0,1015.0" fill="#5c4a22" filter="url(#b1)"/><polygon points="1011.0,900.0 1014.0,900.0 1014.0,1020.0 1011.0,1020.0" fill="#93804c" filter="url(#b1)"/><polygon points="1033.0,925.0 1066.0,925.0 1063.0,1058.0 1029.0,1056.0" fill="#3f3014" filter="url(#b1)"/><polygon points="1031.0,968.0 1064.0,968.0 1064.0,971.0 1031.0,971.0" fill="#6b5a2c"/><polygon points="1030.0,1013.0 1063.0,1013.0 1063.0,1016.0 1030.0,1016.0" fill="#6b5a2c"/><polygon points="1066.0,895.0 1109.0,898.0 1104.0,1093.0 1060.0,1090.0" fill="#715d2e" filter="url(#b1)"/><polygon points="1066.0,944.0 1107.0,944.0 1107.0,947.0 1066.0,947.0" fill="#3b2c10"/><polygon points="1064.0,992.0 1106.0,992.0 1106.0,995.0 1064.0,995.0" fill="#3b2c10"/><polygon points="1062.0,1042.0 1105.0,1042.0 1105.0,1045.0 1062.0,1045.0" fill="#3b2c10"/><polygon points="1066.0,900.0 1108.0,902.0 1107.0,940.0 1066.0,938.0" fill="#7e6a38" filter="url(#b1)"/><polygon points="1060.0,1045.0 1103.0,1047.0 1072.0,1092.0 1060.0,1090.0" fill="#4a3a18" filter="url(#b1)"/><polygon points="1107.0,930.0 1170.0,900.0 1260.0,880.0 1365.0,900.0 1362.0,1160.0 1103.0,1140.0" fill="#231a09" filter="url(#b3)"/><polygon points="1107.0,945.0 1160.0,950.0 1158.0,1128.0 1103.0,1122.0" fill="#3e3015" filter="url(#b2)"/><polygon points="1107.0,968.0 1160.0,968.0 1160.0,971.0 1107.0,971.0" fill="#5c4a22"/><polygon points="1106.0,1020.0 1159.0,1020.0 1159.0,1023.0 1106.0,1023.0" fill="#5c4a22"/><polygon points="1105.0,1072.0 1158.0,1072.0 1158.0,1075.0 1105.0,1075.0" fill="#5c4a22"/><polygon points="1161.0,965.0 1189.0,965.0 1187.0,1142.0 1163.0,1140.0" fill="#7b6536" filter="url(#b3)"/><polygon points="1242.0,990.0 1350.0,985.0 1348.0,1146.0 1240.0,1142.0" fill="#3d3014" filter="url(#b4)"/><polygon points="1242.0,988.0 1350.0,983.0 1350.0,1000.0 1242.0,1006.0" fill="#655328" filter="url(#b3)"/><polygon points="1318.0,1000.0 1356.0,998.0 1352.0,1150.0 1316.0,1150.0" fill="#130d03" filter="url(#b4)"/><polygon points="1190.0,975.0 1242.0,985.0 1240.0,1146.0 1188.0,1142.0" fill="#1c1406" filter="url(#b4)"/><path d="M1010 905L1022 820L1050 770L1085 738L1150 724L1215 742L1290 735L1330 748L1368 740L1368 1000L1330 990L1290 1000L1230 985L1190 960L1150 950L1110 930L1060 925Z" fill="#776334" filter="url(#b3)"/><ellipse cx="1110" cy="830" rx="70" ry="90" fill="#6d5a2c" filter="url(#b4)"/><ellipse cx="1240" cy="860" rx="130" ry="100" fill="#5a4822" filter="url(#b6)"/><ellipse cx="1325" cy="830" rx="45" ry="90" fill="#453515" filter="url(#b6)"/><ellipse cx="1295" cy="935" rx="70" ry="50" fill="#241a08" filter="url(#b6)"/><ellipse cx="1185" cy="935" rx="55" ry="32" fill="#43341a" filter="url(#b6)"/><rect x="1000" y="715" width="372" height="295" filter="url(#leafd)" mask="url(#folmask)"/><rect x="1000" y="715" width="372" height="295" filter="url(#leaf)" opacity="0.95" mask="url(#folmask)"/><ellipse cx="1135" cy="800" rx="24" ry="36" fill="#ddd2ae" filter="url(#b5)" opacity="0.7"/><ellipse cx="1120" cy="868" rx="26" ry="16" fill="#d2c6a0" filter="url(#b5)" opacity="0.7"/><ellipse cx="1100" cy="905" rx="22" ry="14" fill="#d8cda8" filter="url(#b5)" opacity="0.7"/><ellipse cx="1215" cy="800" rx="30" ry="24" fill="#c3b384" filter="url(#b5)" opacity="0.7"/><ellipse cx="1260" cy="762" rx="36" ry="18" fill="#b9a878" filter="url(#b5)" opacity="0.7"/><ellipse cx="1190" cy="860" rx="26" ry="18" fill="#bba977" filter="url(#b5)" opacity="0.7"/><ellipse cx="1262" cy="850" rx="22" ry="14" fill="#a8945e" filter="url(#b5)" opacity="0.7"/><ellipse cx="1235" cy="905" rx="20" ry="12" fill="#b8a674" filter="url(#b5)" opacity="0.7"/><ellipse cx="1332" cy="772" rx="20" ry="20" fill="#bba976" filter="url(#b5)" opacity="0.7"/><ellipse cx="1345" cy="945" rx="14" ry="16" fill="#a8945e" filter="url(#b5)" opacity="0.7"/><ellipse cx="1170" cy="920" rx="28" ry="12" fill="#cdbf96" filter="url(#b5)" opacity="0.7"/><ellipse cx="1080" cy="790" rx="14" ry="20" fill="#2a1f0a" filter="url(#b4)" opacity="0.75"/><ellipse cx="1060" cy="850" rx="12" ry="22" fill="#2a1f0a" filter="url(#b4)" opacity="0.75"/><ellipse cx="1090" cy="940" rx="18" ry="12" fill="#2a1f0a" filter="url(#b4)" opacity="0.75"/><ellipse cx="1175" cy="800" rx="12" ry="18" fill="#2a1f0a" filter="url(#b4)" opacity="0.75"/><ellipse cx="1300" cy="820" rx="20" ry="28" fill="#2a1f0a" filter="url(#b4)" opacity="0.75"/><ellipse cx="1340" cy="880" rx="16" ry="24" fill="#2a1f0a" filter="url(#b4)" opacity="0.75"/><ellipse cx="1290" cy="900" rx="30" ry="20" fill="#2a1f0a" filter="url(#b4)" opacity="0.75"/><ellipse cx="1235" cy="955" rx="25" ry="14" fill="#2a1f0a" filter="url(#b4)" opacity="0.75"/><path d="M596.0 850.0C598.0 845.0 610.7 839.0 612.0 850.0C613.3 861.0 609.4 938.4 609.0 960.0C608.6 981.6 610.2 1055.4 608.0 1066.0C605.8 1076.6 588.9 1076.6 587.0 1066.0C585.1 1055.4 588.5 976.6 589.0 960.0C589.5 943.4 591.3 911.0 592.0 900.0C592.7 889.0 594.0 855.0 596.0 850.0Z" fill="#786839" filter="url(#b1)"/><path d="M607.0 850.0C617.0 836.5 670.4 842.3 680.0 849.0C689.6 855.7 680.1 886.5 679.0 900.0C677.9 913.5 673.7 938.9 672.0 950.0C670.3 961.1 668.9 975.3 666.0 983.0C663.1 990.7 652.4 1001.5 650.0 1008.0C647.6 1014.5 646.3 1024.8 648.0 1032.0C649.7 1039.2 664.1 1056.9 663.0 1062.0C661.9 1067.1 648.1 1068.4 640.0 1070.0C631.9 1071.6 606.9 1083.3 602.0 1074.0C597.1 1064.7 602.6 1016.5 603.0 1000.0C603.4 983.5 604.5 970.0 605.0 950.0C605.5 930.0 597.0 863.5 607.0 850.0Z" fill="#8f7f50" filter="url(#b1)"/><path d="M636.0 860.0C638.7 842.7 647.2 846.7 648.0 860.0C648.8 873.3 644.1 937.3 642.0 960.0C639.9 982.7 634.4 1016.7 632.0 1030.0C629.6 1043.3 625.9 1056.0 624.0 1060.0C622.1 1064.0 617.5 1069.3 618.0 1060.0C618.5 1050.7 625.6 1016.7 628.0 990.0C630.4 963.3 633.3 877.3 636.0 860.0Z" fill="#6a592c" filter="url(#b2)" opacity="0.65"/><path d="M662.0 890.0C664.5 882.7 677.9 886.3 679.0 895.0C680.1 903.7 673.2 940.3 670.0 955.0C666.8 969.7 657.7 999.0 655.0 1005.0C652.3 1011.0 649.3 1007.3 650.0 1000.0C650.7 992.7 658.4 964.7 660.0 950.0C661.6 935.3 659.5 897.3 662.0 890.0Z" fill="#6f5e2e" filter="url(#b2)" opacity="0.6"/><path d="M608.0 900.0C609.6 878.7 617.2 886.7 618.0 900.0C618.8 913.3 615.6 978.7 614.0 1000.0C612.4 1021.3 606.8 1073.3 606.0 1060.0C605.2 1046.7 606.4 921.3 608.0 900.0Z" fill="#a39262" filter="url(#b2)" opacity="0.5"/><polygon points="586.0,1066.0 603.0,1068.0 603.0,1084.0 586.0,1082.0" fill="#6b5a30" filter="url(#b1)"/><path d="M601.0 1076.0C605.9 1073.1 631.9 1071.1 640.0 1069.0C648.1 1066.9 656.7 1060.4 662.0 1060.0C667.3 1059.6 675.9 1063.6 680.0 1066.0C684.1 1068.4 691.1 1075.1 693.0 1078.0C694.9 1080.9 698.4 1086.3 694.0 1088.0C689.6 1089.7 672.1 1090.6 660.0 1091.0C647.9 1091.4 610.9 1093.0 603.0 1091.0C595.1 1089.0 596.1 1078.9 601.0 1076.0Z" fill="#594722" filter="url(#b1)"/><polygon points="603.0,1087.0 693.0,1087.0 693.0,1090.5 603.0,1090.5" fill="#a08d5c"/><path d="M648.0 1068.0C648.2 1066.2 660.0 1063.0 665.0 1063.0C670.0 1063.0 678.2 1066.2 678.0 1068.0C677.8 1069.8 669.0 1074.0 664.0 1074.0C659.0 1074.0 647.8 1069.8 648.0 1068.0Z" fill="#8a7848" filter="url(#b1)" opacity="0.8"/><path d="M597.0 660.0C602.5 658.2 649.6 659.3 652.0 660.0C654.4 660.7 629.8 665.5 626.0 668.0C622.2 670.5 608.2 685.0 607.0 690.0C605.8 695.0 608.4 720.7 611.0 728.0C613.6 735.3 633.8 772.4 638.0 778.0C642.2 783.6 657.8 794.8 662.0 795.0C666.2 795.2 685.8 777.4 688.0 780.0C690.2 782.6 689.8 820.2 689.0 826.0C688.2 831.8 686.8 846.8 679.0 849.0C671.2 851.2 603.8 856.8 596.0 852.0C588.2 847.2 586.3 803.7 585.0 792.0C583.7 780.3 579.9 721.2 580.0 712.0C580.1 702.8 584.6 686.3 586.0 682.0C587.4 677.7 591.5 661.8 597.0 660.0Z" fill="#45361a" filter="url(#b1)"/><polygon points="597.0,832.0 681.0,832.0 681.0,851.0 597.0,851.0" fill="#3a2c12" filter="url(#b1)" opacity="0.7"/><path d="M588.0 700.0C590.0 683.3 597.3 680.0 600.0 690.0C602.7 700.0 602.0 735.0 604.0 760.0C606.0 785.0 613.0 825.7 612.0 840.0C611.0 854.3 602.0 854.3 598.0 846.0C594.0 837.7 589.7 814.3 588.0 790.0C586.3 765.7 586.0 716.7 588.0 700.0Z" fill="#52421f" filter="url(#b2)" opacity="0.7"/><path d="M622.0 666.0C627.0 663.3 650.4 661.0 655.0 665.0C659.6 669.0 665.0 697.7 668.0 706.0C671.0 714.3 685.5 739.2 685.0 748.0C684.5 756.8 667.5 790.8 663.0 794.0C658.5 797.2 645.1 786.4 640.0 780.0C634.9 773.6 615.5 738.8 612.0 730.0C608.5 721.2 604.0 698.4 605.0 692.0C606.0 685.6 617.0 668.7 622.0 666.0Z" fill="#b5a476" filter="url(#b1)"/><path d="M599.0 631.0C603.8 629.6 640.8 633.1 646.0 636.0C651.2 638.9 654.4 656.8 651.0 660.0C647.6 663.2 617.3 669.0 612.0 668.0C606.7 667.0 599.3 653.7 598.0 650.0C596.7 646.3 594.2 632.4 599.0 631.0Z" fill="#b5a476" filter="url(#b1)"/><path d="M622.0 666.0C627.0 663.3 650.4 661.0 655.0 665.0C659.6 669.0 665.0 697.7 668.0 706.0C671.0 714.3 685.5 739.2 685.0 748.0C684.5 756.8 667.5 790.8 663.0 794.0C658.5 797.2 645.1 786.4 640.0 780.0C634.9 773.6 615.5 738.8 612.0 730.0C608.5 721.2 604.0 698.4 605.0 692.0C606.0 685.6 617.0 668.7 622.0 666.0Z" fill="url(#chk)" opacity="0.5"/><path d="M599.0 631.0C603.8 629.6 640.8 633.1 646.0 636.0C651.2 638.9 654.4 656.8 651.0 660.0C647.6 663.2 617.3 669.0 612.0 668.0C606.7 667.0 599.3 653.7 598.0 650.0C596.7 646.3 594.2 632.4 599.0 631.0Z" fill="url(#chk)" opacity="0.5"/><path d="M640.0 700.0C642.0 690.3 654.0 703.7 660.0 712.0C666.0 720.3 675.3 737.7 676.0 750.0C676.7 762.3 668.7 782.7 664.0 786.0C659.3 789.3 652.0 784.3 648.0 770.0C644.0 755.7 638.0 709.7 640.0 700.0Z" fill="#8a7848" filter="url(#b3)" opacity="0.45"/><path d="M630.0 620.0C631.6 617.1 643.5 613.1 648.0 612.0C652.5 610.9 657.1 611.2 664.0 612.0C670.9 612.8 693.6 617.7 700.0 618.0C706.4 618.3 711.1 611.1 712.0 614.0C712.9 616.9 709.3 634.7 707.0 640.0C704.7 645.3 698.2 650.8 695.0 654.0C691.8 657.2 686.3 663.2 683.0 664.0C679.7 664.8 672.5 662.7 670.0 660.0C667.5 657.3 666.7 646.7 664.0 644.0C661.3 641.3 653.7 641.3 650.0 640.0C646.3 638.7 638.7 636.7 636.0 634.0C633.3 631.3 628.4 622.9 630.0 620.0Z" fill="#ded2ae" filter="url(#b1)"/><path d="M640.0 628.0C643.0 626.7 658.0 628.7 664.0 634.0C670.0 639.3 676.0 657.3 676.0 660.0C676.0 662.7 669.0 653.0 664.0 650.0C659.0 647.0 650.0 645.7 646.0 642.0C642.0 638.3 637.0 629.3 640.0 628.0Z" fill="#b5a374" filter="url(#b2)" opacity="0.7"/><path d="M690.0 624.0C692.3 619.0 705.7 617.3 708.0 620.0C710.3 622.7 706.3 635.0 704.0 640.0C701.7 645.0 696.3 652.7 694.0 650.0C691.7 647.3 687.7 629.0 690.0 624.0Z" fill="#c9ba8e" filter="url(#b2)" opacity="0.7"/><path d="M628.0 620.0C625.8 616.9 630.2 597.0 631.0 590.0C631.8 583.0 631.4 577.2 633.0 573.0C634.6 568.8 638.9 564.7 642.0 562.0C645.1 559.3 649.4 557.1 654.0 555.0C658.6 552.9 666.2 548.1 673.0 548.0C679.8 547.9 692.5 550.5 699.0 554.0C705.5 557.5 712.4 565.1 716.0 571.0C719.6 576.9 722.2 586.9 723.0 593.0C723.8 599.1 723.2 609.3 721.0 612.0C718.8 614.7 711.3 610.1 708.0 611.0C704.7 611.9 702.1 616.4 699.0 618.0C695.9 619.6 690.0 623.4 687.0 622.0C684.0 620.6 683.0 611.1 679.0 609.0C675.0 606.9 665.0 607.7 660.0 608.0C655.0 608.3 650.8 609.2 646.0 611.0C641.2 612.8 630.2 623.1 628.0 620.0Z" fill="#55411c" filter="url(#b1)"/><path d="M640.0 580.0C640.7 574.7 646.3 566.3 652.0 562.0C657.7 557.7 666.7 554.3 674.0 554.0C681.3 553.7 690.7 557.0 696.0 560.0C701.3 563.0 708.0 570.3 706.0 572.0C704.0 573.7 691.0 569.0 684.0 570.0C677.0 571.0 670.0 574.0 664.0 578.0C658.0 582.0 652.0 593.7 648.0 594.0C644.0 594.3 639.3 585.3 640.0 580.0Z" fill="#8c7442" filter="url(#b2)" opacity="0.75"/><path d="M690.0 585.0C692.2 580.0 709.8 576.5 715.0 580.0C720.2 583.5 723.2 601.0 721.0 606.0C718.8 611.0 707.2 613.5 702.0 610.0C696.8 606.5 687.8 590.0 690.0 585.0Z" fill="#3b2b0e" filter="url(#b2)" opacity="0.7"/><path d="M632.0 600.0C633.3 595.7 641.0 589.0 644.0 590.0C647.0 591.0 651.3 601.7 650.0 606.0C648.7 610.3 639.0 617.0 636.0 616.0C633.0 615.0 630.7 604.3 632.0 600.0Z" fill="#3f2e10" filter="url(#b2)" opacity="0.6"/><ellipse cx="670.5" cy="616" rx="7" ry="10.5" fill="#dbcea8" filter="url(#b1)" transform="rotate(10 670.5 616)"/><ellipse cx="671.5" cy="618" rx="3" ry="5.5" fill="#7d683a" filter="url(#b1)" transform="rotate(10 671.5 618)"/><path d="M697 684L695 760L691 866L701 866L703 760L700 684Z" fill="#3a2a0e" filter="url(#b1)"/><path d="M704.0 745.0C704.0 742.1 708.8 731.9 712.0 728.0C715.2 724.1 723.5 718.7 728.0 716.0C732.5 713.3 744.4 706.9 746.0 708.0C747.6 709.1 742.9 719.7 740.0 724.0C737.1 728.3 727.7 736.5 724.0 740.0C720.3 743.5 714.7 749.3 712.0 750.0C709.3 750.7 704.0 747.9 704.0 745.0Z" fill="#5a4a22" filter="url(#b1)"/><path d="M690.0 738.0C691.3 734.5 703.1 726.7 706.0 728.0C708.9 729.3 713.3 744.5 712.0 748.0C710.7 751.5 698.9 755.3 696.0 754.0C693.1 752.7 688.7 741.5 690.0 738.0Z" fill="#4a3a18" filter="url(#b1)"/><path d="M664.0 664.0C662.7 657.7 664.7 652.0 668.0 648.0C671.3 644.0 678.0 641.3 684.0 640.0C690.0 638.7 698.0 638.3 704.0 640.0C710.0 641.7 716.7 645.3 720.0 650.0C723.3 654.7 725.3 662.3 724.0 668.0C722.7 673.7 716.7 680.3 712.0 684.0C707.3 687.7 702.0 689.7 696.0 690.0C690.0 690.3 681.3 690.3 676.0 686.0C670.7 681.7 665.3 670.3 664.0 664.0Z" fill="#d7caa0" filter="url(#b1)"/><path d="M672.0 672.0C672.7 668.3 679.3 663.3 684.0 662.0C688.7 660.7 696.0 661.7 700.0 664.0C704.0 666.3 708.7 672.3 708.0 676.0C707.3 679.7 700.7 684.7 696.0 686.0C691.3 687.3 684.0 686.3 680.0 684.0C676.0 681.7 671.3 675.7 672.0 672.0Z" fill="#a08c54" filter="url(#b2)" opacity="0.7"/><path d="M694.0 646.0C695.0 643.7 707.7 644.0 712.0 646.0C716.3 648.0 721.0 655.7 720.0 658.0C719.0 660.3 710.3 662.0 706.0 660.0C701.7 658.0 693.0 648.3 694.0 646.0Z" fill="#e8dfc4" filter="url(#b2)" opacity="0.8"/><path d="M668.0 652.0C669.0 649.3 677.0 643.7 680.0 644.0C683.0 644.3 687.0 651.3 686.0 654.0C685.0 656.7 677.0 660.3 674.0 660.0C671.0 659.7 667.0 654.7 668.0 652.0Z" fill="#e4dab8" filter="url(#b2)" opacity="0.8"/><path d="M676.0 706.0C678.3 701.8 685.0 699.3 690.0 699.0C695.0 698.7 702.7 700.2 706.0 704.0C709.3 707.8 710.7 717.0 710.0 722.0C709.3 727.0 706.0 732.0 702.0 734.0C698.0 736.0 690.3 735.7 686.0 734.0C681.7 732.3 677.7 728.7 676.0 724.0C674.3 719.3 673.7 710.2 676.0 706.0Z" fill="#decfa8" filter="url(#b1)"/><path d="M676.0 706.0C677.3 701.3 685.3 698.0 688.0 702.0C690.7 706.0 693.3 725.3 692.0 730.0C690.7 734.7 682.7 734.0 680.0 730.0C677.3 726.0 674.7 710.7 676.0 706.0Z" fill="#c3b080" filter="url(#b2)" opacity="0.6"/><path d="M681.0 752.0C683.7 747.7 696.8 750.0 704.0 750.0C711.2 750.0 717.7 750.0 724.0 752.0C730.3 754.0 739.0 757.3 742.0 762.0C745.0 766.7 744.7 775.7 742.0 780.0C739.3 784.3 732.3 787.3 726.0 788.0C719.7 788.7 710.3 786.0 704.0 784.0C697.7 782.0 691.8 781.3 688.0 776.0C684.2 770.7 678.3 756.3 681.0 752.0Z" fill="#e0d3ae" filter="url(#b1)"/><path d="M700.0 776.0C703.7 773.3 727.7 772.3 734.0 774.0C740.3 775.7 741.7 783.3 738.0 786.0C734.3 788.7 718.3 791.7 712.0 790.0C705.7 788.3 696.3 778.7 700.0 776.0Z" fill="#b5a272" filter="url(#b2)" opacity="0.6"/><path d="M716.0 1003.0C721.8 998.0 763.3 1006.3 770.0 1010.0C776.7 1013.7 782.4 1033.8 783.0 1040.0C783.6 1046.2 780.3 1068.4 776.0 1072.0C771.7 1075.6 746.4 1077.2 740.0 1076.0C733.6 1074.8 714.4 1067.3 712.0 1060.0C709.6 1052.7 710.2 1008.0 716.0 1003.0Z" fill="#4b3b19" filter="url(#b1)"/><path d="M729.0 1070.0C730.3 1066.8 738.9 1060.4 745.0 1058.0C751.1 1055.6 767.7 1052.8 775.0 1052.0C782.3 1051.2 792.7 1053.6 800.0 1052.0C807.3 1050.4 825.7 1039.5 830.0 1040.0C834.3 1040.5 834.4 1052.0 832.0 1056.0C829.6 1060.0 817.6 1066.8 812.0 1070.0C806.4 1073.2 800.3 1078.4 790.0 1080.0C779.7 1081.6 743.1 1083.3 735.0 1082.0C726.9 1080.7 727.7 1073.2 729.0 1070.0Z" fill="#dbd0ae" filter="url(#b1)"/><path d="M760.0 1010.0C765.7 1005.6 824.6 1001.8 832.0 1006.0C839.4 1010.2 837.2 1047.0 834.0 1052.0C830.8 1057.0 805.9 1056.2 800.0 1056.0C794.1 1055.8 779.0 1054.6 775.0 1050.0C771.0 1045.4 754.3 1014.4 760.0 1010.0Z" fill="#c9bb90" filter="url(#b1)"/><polygon points="808.0,1062.0 816.0,1062.0 816.0,1078.0 808.0,1078.0" fill="#6b5a30" filter="url(#b1)"/><path d="M800.0 700.0C803.9 698.5 811.1 726.5 812.0 740.0C812.9 753.5 809.3 779.2 806.0 790.0C802.7 800.8 796.3 807.2 790.0 812.0C783.7 816.8 770.0 822.0 764.0 822.0C758.0 822.0 749.1 816.8 750.0 812.0C750.9 807.2 764.6 799.3 770.0 790.0C775.4 780.7 781.5 763.5 786.0 750.0C790.5 736.5 796.1 701.5 800.0 700.0Z" fill="#d9cca4" filter="url(#b1)"/><path d="M676.0 900.0C674.2 892.5 673.6 884.4 676.0 880.0C678.4 875.6 684.8 872.8 692.0 871.0C699.2 869.2 713.5 866.0 724.0 868.0C734.5 870.0 742.8 876.2 762.0 884.0C781.2 891.8 839.1 902.6 852.0 920.0C864.9 937.4 855.8 985.6 848.0 1000.0C840.2 1014.4 813.2 1014.4 800.0 1016.0C786.8 1017.6 771.7 1013.7 760.0 1011.0C748.3 1008.3 731.0 1005.4 722.0 998.0C713.0 990.6 705.1 972.2 700.0 962.0C694.9 951.8 691.6 939.3 688.0 930.0C684.4 920.7 677.8 907.5 676.0 900.0Z" fill="#dccfa8" filter="url(#b1)"/><path d="M690.0 930.0C693.3 926.8 711.3 931.0 720.0 936.0C728.7 941.0 734.7 951.0 742.0 960.0C749.3 969.0 754.3 983.3 764.0 990.0C773.7 996.7 797.3 996.3 800.0 1000.0C802.7 1003.7 788.0 1010.7 780.0 1012.0C772.0 1013.3 762.7 1011.0 752.0 1008.0C741.3 1005.0 724.7 1002.8 716.0 994.0C707.3 985.2 704.3 965.7 700.0 955.0C695.7 944.3 686.7 933.2 690.0 930.0Z" fill="#b9a776" filter="url(#b3)" opacity="0.7"/><path d="M700.0 880.0C698.3 876.0 718.3 873.5 730.0 876.0C741.7 878.5 768.3 891.0 770.0 895.0C771.7 899.0 751.7 902.5 740.0 900.0C728.3 897.5 701.7 884.0 700.0 880.0Z" fill="#ece3c8" filter="url(#b3)" opacity="0.7"/><path d="M700.0 872.0C703.5 868.0 742.3 865.3 760.0 866.0C777.7 866.7 841.5 867.0 852.0 878.0C862.5 889.0 857.0 946.9 850.0 960.0C843.0 973.1 802.5 991.2 792.0 990.0C781.5 988.8 767.2 960.5 760.0 950.0C752.8 939.5 737.0 909.1 730.0 900.0C723.0 890.9 696.5 876.0 700.0 872.0Z" fill="#d8cca6" filter="url(#b1)"/><path d="M846.0 880.0C854.3 874.0 930.8 861.5 940.0 868.0C949.2 874.5 953.3 944.3 956.0 958.0C958.7 971.7 969.9 1021.7 972.0 1032.0C974.1 1042.3 990.9 1077.4 981.0 1082.0C971.1 1086.6 865.5 1087.8 853.0 1087.0C840.5 1086.2 832.6 1079.2 831.0 1072.0C829.4 1064.8 833.2 1011.0 834.0 1000.0C834.8 989.0 839.0 950.0 840.0 940.0C841.0 930.0 837.7 886.0 846.0 880.0Z" fill="#e3d9b8" filter="url(#b1)"/><path d="M930.0 880.0C929.2 869.2 939.2 864.0 942.0 872.0C944.8 880.0 954.7 943.2 958.0 960.0C961.3 976.8 972.7 1028.0 975.0 1040.0C977.3 1052.0 981.7 1076.0 981.0 1080.0C980.3 1084.0 971.1 1090.0 968.0 1080.0C964.9 1070.0 953.8 1000.0 950.0 980.0C946.2 960.0 930.8 890.8 930.0 880.0Z" fill="#c0af80" filter="url(#b2)" opacity="0.8"/><path d="M868.0 960.0C872.5 944.5 896.5 928.0 900.0 936.0C903.5 944.0 898.5 1004.5 894.0 1020.0C889.5 1035.5 869.5 1060.0 866.0 1052.0C862.5 1044.0 863.5 975.5 868.0 960.0Z" fill="#cbbd94" filter="url(#b4)" opacity="0.8"/><path d="M846.0 900.0C848.9 877.3 860.4 876.7 862.0 890.0C863.6 903.3 860.9 977.3 858.0 1000.0C855.1 1022.7 841.6 1073.3 840.0 1060.0C838.4 1046.7 843.1 922.7 846.0 900.0Z" fill="#cbbd94" filter="url(#b4)" opacity="0.7"/><path d="M978.0 1058.0C981.3 1054.5 997.5 1057.4 1005.0 1059.0C1012.5 1060.6 1030.7 1066.8 1034.0 1070.0C1037.3 1073.2 1037.2 1081.0 1030.0 1083.0C1022.8 1085.0 986.9 1088.3 980.0 1085.0C973.1 1081.7 974.7 1061.5 978.0 1058.0Z" fill="#ddd2b0" filter="url(#b1)"/><path d="M810.0 678.0C813.0 675.1 826.7 672.1 831.0 672.0C835.3 671.9 845.6 673.6 853.0 677.0C860.4 680.4 896.4 700.7 905.0 706.0C913.6 711.3 935.7 723.0 939.0 730.0C942.3 737.0 939.0 769.0 938.0 776.0C937.0 783.0 930.9 795.0 929.0 800.0C927.1 805.0 920.4 820.0 919.0 826.0C917.6 832.0 915.4 854.6 915.0 860.0C914.6 865.4 921.5 877.4 915.0 880.0C908.5 882.6 861.2 887.8 850.0 886.0C838.8 884.2 808.0 868.0 803.0 862.0C798.0 856.0 801.0 832.0 800.0 826.0C799.0 820.0 794.3 806.7 793.0 802.0C791.7 797.3 787.0 785.0 787.0 779.0C787.0 773.0 791.6 749.8 793.0 742.0C794.4 734.2 799.3 707.4 801.0 701.0C802.7 694.6 807.0 680.9 810.0 678.0Z" fill="#d9cda6" filter="url(#b1)"/><path d="M796.0 790.0C799.2 783.3 821.1 790.9 828.0 800.0C834.9 809.1 851.2 851.3 848.0 858.0C844.8 864.7 810.9 859.1 804.0 850.0C797.1 840.9 792.8 796.7 796.0 790.0Z" fill="#c5b68a" filter="url(#b3)" opacity="0.6"/><path d="M800.0 858.0C811.3 857.0 903.5 860.2 915.0 862.0C926.5 863.8 926.3 875.0 915.0 876.0C903.7 877.0 813.5 873.8 802.0 872.0C790.5 870.2 788.7 859.0 800.0 858.0Z" fill="#c9bb90" filter="url(#b2)" opacity="0.8"/><polygon points="767.0,884.0 797.0,866.0 800.0,878.0 782.0,891.0" fill="#4a3a18" filter="url(#b1)"/><path d="M852.0 668.0C856.5 666.9 873.6 673.1 880.0 676.0C886.4 678.9 894.0 685.7 900.0 690.0C906.0 694.3 924.5 704.9 925.0 708.0C925.5 711.1 910.5 711.0 904.0 713.0C897.5 715.0 883.1 722.3 876.0 723.0C868.9 723.7 855.4 720.9 851.0 718.0C846.6 715.1 843.7 705.5 843.0 701.0C842.3 696.5 844.8 688.4 846.0 684.0C847.2 679.6 847.5 669.1 852.0 668.0Z" fill="#e4dabc" filter="url(#b1)"/><path d="M870.0 680.0C872.7 678.7 894.3 688.7 896.0 692.0C897.7 695.3 884.3 702.0 880.0 700.0C875.7 698.0 867.3 681.3 870.0 680.0Z" fill="#c9ba90" filter="url(#b3)" opacity="0.6"/><path d="M909.0 726.0C915.1 723.1 933.7 727.3 938.0 730.0C942.3 732.7 941.4 739.9 941.0 746.0C940.6 752.1 937.5 767.6 935.0 776.0C932.5 784.4 926.0 800.2 922.0 809.0C918.0 817.8 909.8 834.3 905.0 842.0C900.2 849.7 891.2 861.7 886.0 867.0C880.8 872.3 870.9 879.5 866.0 882.0C861.1 884.5 856.5 887.3 849.0 886.0C841.5 884.7 819.7 876.8 810.0 872.0C800.3 867.2 782.7 854.5 776.0 850.0C769.3 845.5 762.1 843.9 760.0 838.0C757.9 832.1 755.6 808.8 760.0 806.0C764.4 803.2 783.1 812.7 793.0 817.0C802.9 821.3 826.1 836.8 834.0 838.0C841.9 839.2 847.7 830.8 852.0 826.0C856.3 821.2 862.4 808.7 866.0 802.0C869.6 795.3 875.5 782.7 879.0 776.0C882.5 769.3 888.0 758.7 892.0 752.0C896.0 745.3 902.9 728.9 909.0 726.0Z" fill="#ddd0a8" filter="url(#b1)"/><path d="M928.0 740.0C931.3 736.7 937.7 750.0 938.0 760.0C938.3 770.0 934.0 787.0 930.0 800.0C926.0 813.0 920.7 827.0 914.0 838.0C907.3 849.0 897.7 859.0 890.0 866.0C882.3 873.0 868.7 882.7 868.0 880.0C867.3 877.3 879.7 861.3 886.0 850.0C892.3 838.7 900.7 823.7 906.0 812.0C911.3 800.3 914.3 792.0 918.0 780.0C921.7 768.0 924.7 743.3 928.0 740.0Z" fill="#b5a372" filter="url(#b3)" opacity="0.7"/><path d="M800.0 850.0C808.3 851.7 830.0 863.0 840.0 868.0C850.0 873.0 861.7 878.3 860.0 880.0C858.3 881.7 841.7 881.7 830.0 878.0C818.3 874.3 795.0 862.7 790.0 858.0C785.0 853.3 791.7 848.3 800.0 850.0Z" fill="#b9a878" filter="url(#b3)" opacity="0.6"/><path d="M694.0 790.0C695.5 785.2 706.3 789.1 712.0 790.0C717.7 790.9 726.0 793.6 732.0 796.0C738.0 798.4 747.8 802.1 752.0 806.0C756.2 809.9 759.7 816.6 760.0 822.0C760.3 827.4 759.7 839.6 754.0 842.0C748.3 844.4 729.8 841.0 722.0 838.0C714.2 835.0 706.2 829.2 702.0 822.0C697.8 814.8 692.5 794.8 694.0 790.0Z" fill="#cdbb8c" filter="url(#b1)"/><path d="M694.0 798.0C696.0 794.0 709.3 792.7 714.0 798.0C718.7 803.3 724.0 826.0 722.0 830.0C720.0 834.0 706.7 827.3 702.0 822.0C697.3 816.7 692.0 802.0 694.0 798.0Z" fill="#9c8854" filter="url(#b2)" opacity="0.7"/><path d="M854.0 589.0C851.0 591.1 848.4 600.0 846.0 604.0C843.6 608.0 840.0 612.7 838.0 616.0C836.0 619.3 833.0 623.5 833.0 626.0C833.0 628.5 837.0 630.9 838.0 633.0C839.0 635.1 840.3 637.8 840.0 640.0C839.7 642.2 836.3 645.6 836.0 648.0C835.7 650.4 837.7 653.6 838.0 656.0C838.3 658.4 836.8 661.6 838.0 664.0C839.2 666.4 842.7 670.4 846.0 672.0C849.3 673.6 855.5 675.1 860.0 675.0C864.5 674.9 871.6 673.2 876.0 671.0C880.4 668.8 886.5 664.0 889.0 660.0C891.5 656.0 893.1 649.7 893.0 644.0C892.9 638.3 890.5 628.6 888.0 622.0C885.5 615.4 879.3 604.8 876.0 600.0C872.7 595.2 869.3 591.6 866.0 590.0C862.7 588.4 857.0 586.9 854.0 589.0Z" fill="#e6dcc0" filter="url(#b1)"/><path d="M860.0 640.0C863.0 633.7 875.0 628.3 880.0 630.0C885.0 631.7 890.7 643.7 890.0 650.0C889.3 656.3 880.7 665.0 876.0 668.0C871.3 671.0 864.7 672.7 862.0 668.0C859.3 663.3 857.0 646.3 860.0 640.0Z" fill="#d3c59e" filter="url(#b3)" opacity="0.6"/><path d="M845 650Q855 656 866 652Q860 662 848 660Z" fill="#6b5a30" filter="url(#b1)" opacity="0.8"/><path d="M852 618Q860 622 868 618" fill="none" stroke="#5c4a22" stroke-width="2" filter="url(#b1)"/><path d="M853.0 591.0C852.1 588.9 855.1 577.8 858.0 574.0C860.9 570.2 865.7 568.0 872.0 566.0C878.3 564.0 891.3 560.9 900.0 561.0C908.7 561.1 922.2 564.1 930.0 567.0C937.8 569.9 947.2 573.5 952.0 580.0C956.8 586.5 960.0 601.0 962.0 610.0C964.0 619.0 965.1 631.3 965.0 640.0C964.9 648.7 963.0 660.2 961.0 668.0C959.0 675.8 956.6 686.9 952.0 692.0C947.4 697.1 936.9 700.5 930.0 702.0C923.1 703.5 911.5 704.4 906.0 702.0C900.5 699.6 896.0 692.0 893.0 686.0C890.0 680.0 886.0 668.3 886.0 662.0C886.0 655.7 893.3 650.3 893.0 644.0C892.7 637.7 886.9 626.6 884.0 620.0C881.1 613.4 877.0 604.8 874.0 600.0C871.0 595.2 867.1 589.4 864.0 588.0C860.9 586.6 853.9 593.1 853.0 591.0Z" fill="#3c2b0d" filter="url(#b1)"/><path d="M878.0 584.0C879.7 580.7 895.5 572.0 905.0 572.0C914.5 572.0 927.5 579.3 935.0 584.0C942.5 588.7 947.0 592.3 950.0 600.0C953.0 607.7 954.7 629.7 953.0 630.0C951.3 630.3 946.3 608.3 940.0 602.0C933.7 595.7 922.5 593.7 915.0 592.0C907.5 590.3 901.2 593.3 895.0 592.0C888.8 590.7 876.3 587.3 878.0 584.0Z" fill="#8a7240" filter="url(#b3)" opacity="0.7"/><path d="M900.0 650.0C900.0 646.7 917.3 639.2 925.0 640.0C932.7 640.8 941.8 649.0 946.0 655.0C950.2 661.0 952.0 669.8 950.0 676.0C948.0 682.2 935.7 693.0 934.0 692.0C932.3 691.0 941.5 675.3 940.0 670.0C938.5 664.7 931.7 663.3 925.0 660.0C918.3 656.7 900.0 653.3 900.0 650.0Z" fill="#7a6434" filter="url(#b3)" opacity="0.6"/><path d="M890.0 600.0C890.8 595.0 900.8 603.3 905.0 610.0C909.2 616.7 915.8 635.0 915.0 640.0C914.2 645.0 904.2 646.7 900.0 640.0C895.8 633.3 889.2 605.0 890.0 600.0Z" fill="#6a5428" filter="url(#b3)" opacity="0.5"/></g><g clip-path="url(#ph)"><polygon points="426.9,481.5 433.9,481.8 441.0,479.9 448.0,482.7 455.0,481.0 462.0,482.0 469.0,483.6 476.1,481.9 483.0,484.3 490.1,482.8 497.0,484.7 504.0,484.9 511.1,483.7 518.2,482.2 525.1,485.6 532.1,485.4 539.2,483.9 546.2,482.8 553.2,484.7 560.2,485.8 567.3,483.5 574.1,487.9 581.3,484.6 588.2,487.4 595.2,488.3 602.2,488.7 609.2,488.2 616.3,486.2 623.2,489.3 630.3,487.8 637.3,487.8 644.3,489.3 651.3,488.8 658.2,491.2 665.2,491.5 672.3,491.1 679.4,489.3 686.3,490.7 693.3,491.5 700.4,490.6 707.4,491.5 714.3,492.4 721.4,490.5 728.4,491.2 735.4,493.5 742.4,492.3 749.4,492.8 756.5,491.6 763.5,492.5 770.4,494.7 777.5,492.0 784.4,496.0 791.5,495.0 798.5,493.8 805.4,496.7 812.5,495.5 819.4,497.8 826.6,495.3 833.6,495.2 840.6,496.3 847.6,495.2 854.5,498.0 861.6,496.6 868.6,497.3 875.6,497.7 882.6,498.5 889.7,497.1 896.7,496.9 903.6,499.3 910.7,498.7 917.6,501.6 924.7,499.1 931.7,499.6 938.8,498.4 945.7,499.4 952.7,502.1 959.7,501.9 966.7,500.9 973.6,504.1 980.7,502.4 987.7,504.0 994.7,504.5 1001.7,505.0 1008.8,502.2 1015.7,505.3 1022.7,505.0 1029.8,504.7 1036.9,502.9 1043.7,506.6 1050.8,505.3 1057.8,505.1 1064.9,503.9 1071.9,504.5 1078.9,504.6 1085.8,507.4 1092.9,507.1 1099.9,507.6 1107.0,505.6 1114.0,505.6 1120.9,509.4 1127.9,509.6 1134.9,509.6 1141.9,509.9 1149.0,509.1 1156.0,508.9 1162.9,510.6 1169.9,512.0 1177.0,510.5 1184.0,511.0 1191.0,510.4 1198.1,509.0 1205.1,510.4 1212.0,511.5 1219.1,511.3 1226.1,511.3 1233.0,514.3 1240.1,510.9 1247.1,511.7 1254.2,511.6 1261.2,512.2 1268.1,514.3 1275.1,514.5 1282.1,516.1 1289.2,514.0 1296.1,516.8 1303.1,517.1 1310.1,516.8 1317.1,517.2 1324.2,516.7 1331.1,518.3 1338.1,518.8 1345.2,518.4 1352.2,518.9 1359.2,518.0 1364.7,517.7 1367.6,524.8 1366.2,531.8 1363.9,538.7 1364.0,545.8 1364.2,552.8 1364.0,559.9 1362.6,566.9 1365.5,574.0 1365.9,581.1 1363.3,588.0 1363.1,595.0 1361.0,602.0 1360.8,609.0 1361.6,616.1 1361.0,623.1 1363.2,630.2 1360.0,637.1 1359.1,644.1 1362.9,651.3 1360.7,658.3 1358.8,665.2 1360.2,672.3 1357.7,679.3 1359.6,686.4 1361.3,693.5 1360.5,700.5 1359.5,707.5 1357.3,714.5 1357.5,721.5 1356.3,728.5 1358.7,735.6 1357.4,742.6 1358.2,749.7 1355.9,756.6 1355.1,763.6 1357.5,770.8 1357.9,777.8 1357.1,784.8 1356.6,791.9 1356.4,798.9 1355.7,805.9 1353.2,812.8 1354.2,819.9 1353.2,826.9 1351.5,833.9 1351.2,840.9 1352.0,848.0 1351.6,855.0 1353.3,862.1 1354.1,869.2 1351.6,876.1 1353.5,883.2 1353.4,890.3 1353.0,897.3 1350.1,904.2 1349.2,911.2 1349.0,918.3 1348.5,925.3 1348.3,932.3 1349.9,939.4 1350.8,946.5 1350.2,953.5 1348.4,960.5 1348.9,967.5 1349.2,974.6 1345.8,981.5 1348.0,988.6 1348.9,995.7 1348.0,1002.7 1347.6,1009.7 1346.1,1016.7 1344.5,1023.7 1346.9,1030.8 1344.6,1037.7 1346.4,1044.9 1346.9,1051.9 1344.1,1058.8 1343.8,1065.9 1345.9,1073.0 1344.7,1080.0 1341.9,1086.9 1341.5,1093.9 1341.3,1101.0 1344.3,1108.1 1343.6,1115.1 1340.4,1122.0 1343.1,1129.2 1343.5,1136.2 1341.8,1143.2 1340.9,1148.7 1333.8,1150.1 1326.9,1148.0 1319.9,1147.2 1312.7,1151.2 1305.8,1149.5 1298.8,1148.6 1291.7,1150.1 1284.8,1147.7 1277.7,1149.3 1270.7,1148.8 1263.8,1145.8 1256.8,1145.7 1249.8,1145.6 1242.8,1145.1 1235.7,1146.4 1228.7,1144.7 1221.7,1145.1 1214.7,1143.5 1207.6,1146.7 1200.7,1143.9 1193.7,1144.1 1186.6,1144.4 1179.6,1145.5 1172.6,1143.1 1165.5,1145.0 1158.6,1142.9 1151.6,1142.8 1144.6,1142.4 1137.7,1139.9 1130.6,1141.5 1123.6,1140.1 1116.6,1139.0 1109.5,1142.2 1102.6,1139.2 1095.5,1140.2 1088.5,1141.1 1081.5,1140.0 1074.5,1138.8 1067.5,1139.3 1060.5,1139.2 1053.4,1139.9 1046.5,1136.7 1039.4,1138.4 1032.5,1136.7 1025.5,1136.6 1018.4,1138.5 1011.4,1137.0 1004.4,1137.0 997.3,1137.6 990.3,1138.0 983.4,1135.6 976.3,1136.1 969.3,1135.3 962.3,1135.1 955.3,1135.6 948.3,1134.2 941.3,1134.3 934.3,1133.8 927.2,1135.5 920.2,1134.2 913.2,1134.7 906.2,1134.7 899.3,1131.4 892.2,1132.5 885.2,1133.9 878.2,1133.1 871.3,1129.8 864.3,1129.4 857.2,1130.5 850.3,1128.6 843.2,1129.1 836.2,1128.1 829.1,1130.4 822.1,1130.6 815.1,1130.8 808.2,1127.3 801.1,1129.5 794.1,1129.0 787.2,1126.4 780.0,1129.4 773.0,1129.5 766.1,1125.9 759.0,1128.8 752.1,1126.1 745.1,1126.2 738.0,1128.2 731.0,1127.2 724.1,1124.0 717.0,1124.9 710.0,1124.9 703.0,1123.9 696.0,1123.0 689.0,1123.2 681.9,1124.7 675.0,1121.4 667.9,1123.4 661.0,1122.6 654.0,1120.5 647.0,1121.6 639.9,1122.6 632.9,1121.8 626.0,1119.6 618.8,1123.3 611.8,1122.2 604.8,1122.7 597.9,1118.6 590.9,1119.1 583.9,1117.8 576.8,1120.8 569.9,1118.2 562.9,1117.3 555.8,1118.3 548.7,1120.2 541.7,1119.5 534.8,1116.8 527.8,1116.0 520.7,1119.1 513.7,1117.3 506.7,1117.6 499.8,1114.6 492.8,1114.2 485.7,1116.7 478.7,1115.3 471.8,1113.4 464.6,1117.0 457.6,1115.3 450.6,1115.8 443.7,1112.3 436.6,1115.5 429.7,1111.7 422.6,1114.9 415.6,1112.8 408.6,1112.1 403.1,1112.6 400.0,1105.4 403.2,1098.5 404.1,1091.5 402.6,1084.4 404.2,1077.4 405.0,1070.4 405.1,1063.4 405.8,1056.3 405.4,1049.3 405.2,1042.2 405.6,1035.2 403.8,1028.1 406.2,1021.2 405.5,1014.1 407.2,1007.1 406.8,1000.1 408.5,993.1 407.8,986.0 409.1,979.0 406.2,971.9 407.3,964.9 409.2,957.9 408.2,950.9 406.5,943.7 410.4,936.9 407.5,929.7 409.5,922.8 409.5,915.7 408.3,908.6 410.5,901.7 410.3,894.6 409.8,887.6 408.8,880.5 411.9,873.6 410.0,866.5 410.8,859.5 411.4,852.4 412.7,845.5 413.3,838.4 414.8,831.5 414.8,824.4 415.3,817.4 412.7,810.3 415.1,803.3 415.8,796.3 416.4,789.3 413.4,782.1 413.5,775.1 414.7,768.1 416.7,761.1 417.1,754.1 417.2,747.1 416.7,740.0 418.3,733.1 417.4,726.0 418.4,719.0 415.7,711.8 415.9,704.8 418.0,697.8 419.7,690.9 416.8,683.7 419.9,676.8 420.0,669.8 421.9,662.8 420.5,655.7 420.3,648.7 420.5,641.6 422.1,634.7 421.1,627.6 423.5,620.6 422.7,613.6 423.7,606.6 422.6,599.5 424.5,592.5 424.9,585.5 423.9,578.4 424.5,571.4 423.2,564.3 423.8,557.3 423.1,550.2 423.8,543.2 423.8,536.2 423.4,529.1 425.8,522.2 426.4,515.2 423.7,508.0 427.7,501.1 425.4,494.0 426.1,487.0" fill="none" stroke="#6b5420" stroke-width="7" filter="url(#b3)" opacity="0.35"/></g></svg></div>
<span class="t" style="left:1784.00px;top:144.20px;font-size:24.56px;color:#4b5565;transform:scaleX(0.9945);">Rotation</span>
<div class="a dots" style="left:1888px;top:156px;width:540px"></div>
<span class="t" style="left:1784.00px;top:278.20px;font-size:24.56px;color:#4b5565;transform:scaleX(1.0450);">Crop / Mirror</span>
<div class="a dots" style="left:1940px;top:290px;width:488px"></div>
<span class="t" style="left:1784.00px;top:406.20px;font-size:24.56px;color:#4b5565;transform:scaleX(0.9298);">Exposure</span>
<div class="a dots" style="left:1892px;top:418px;width:536px"></div>
<span class="t" style="left:1784.00px;top:602.20px;font-size:24.56px;color:#4b5565;transform:scaleX(0.9709);">Color</span>
<div class="a dots" style="left:1852px;top:614px;width:576px"></div>
<div class="a btn focus" style="left:1783px;top:193px;width:151px;height:54px">
<svg style="left:3.70px;top:2.60px" width="44" height="44" viewBox="-22.0 -22.0 44 44"><g fill="none" stroke="#000" stroke-width="3.2" stroke-linecap="round" stroke-linejoin="round"><path d="M-16.14 -1.41A16.2 16.2 0 1 0 7.33 -14.45"/><path d="M14.6 -14.4H7.3V-7.2" stroke-width="3.4"/><path d="M-14.97 -6.20A16.2 16.2 0 0 1 0.42 -16.19" stroke-dasharray="2.4 4.05" stroke-width="3.3"/></g></svg>
<span class="t" style="left:53.50px;top:13.12px;font-size:24.42px;color:#5c6777;transform:scaleX(0.9500);">-90°</span>
</div>
<div class="a btn" style="left:1948px;top:193px;width:151px;height:54px">
<svg style="left:3.90px;top:2.60px" width="44" height="44" viewBox="-22.0 -22.0 44 44"><g fill="none" stroke="#000" stroke-width="3.2" stroke-linecap="round" stroke-linejoin="round"><path d="M-14.59 -7.05A16.2 16.2 0 1 1 -0.85 16.18"/><path d="M0.2 -16.2V16.2"/><path d="M-14.7 -14.6V-7.1H-7.0" stroke-width="3.4"/><path d="M-5.81 15.12A16.2 16.2 0 0 1 -16.20 0.00" stroke-dasharray="2.4 4.05" stroke-width="3.3"/></g></svg>
<span class="t" style="left:53.70px;top:13.12px;font-size:24.42px;color:#5c6777;transform:scaleX(0.9041);">180°</span>
</div>
<div class="a btn" style="left:2113px;top:193px;width:151px;height:54px">
<svg style="left:3.30px;top:2.60px" width="44" height="44" viewBox="-22.0 -22.0 44 44"><g fill="none" stroke="#000" stroke-width="3.2" stroke-linecap="round" stroke-linejoin="round"><g transform="scale(-1,1)"><path d="M-16.14 -1.41A16.2 16.2 0 1 0 7.33 -14.45"/><path d="M14.6 -14.4H7.3V-7.2" stroke-width="3.4"/><path d="M-14.97 -6.20A16.2 16.2 0 0 1 0.42 -16.19" stroke-dasharray="2.4 4.05" stroke-width="3.3"/></g></g></svg>
<span class="t" style="left:53.90px;top:13.12px;font-size:24.42px;color:#5c6777;transform:scaleX(0.9442);">+90°</span>
</div>
<div class="a btn" style="left:2278px;top:193px;width:151px;height:54px">
<svg style="left:3.90px;top:2.70px" width="44" height="44" viewBox="-22.0 -22.0 44 44"><g fill="none" stroke="#000" stroke-width="3.2" stroke-linecap="round" stroke-linejoin="round"><path d="M-0.57 -16.19A16.2 16.2 0 0 1 5.95 15.07"/><path d="M6.2 9V15.7H13.5" stroke-width="3.4"/><path d="M0.57 16.19A16.2 16.2 0 0 1 -6.12 -15.00"/><path d="M-13.5 -15.7H-6.4V-8.5" stroke-width="3.4"/></g></svg>
<span class="t" style="left:53.30px;top:13.12px;font-size:24.42px;color:#5c6777;transform:scaleX(0.8748);">Free</span>
</div>
<div class="a btn" style="left:1783px;top:321px;width:316px;height:54px">
<svg style="left:4.00px;top:3.00px" width="44" height="44" viewBox="-22.0 -22.0 44 44"><g fill="none" stroke="#000" stroke-width="3.2" stroke-linecap="round" stroke-linejoin="round"><path d="M-10.1 -16.6V9.9H16.7M-16.8 -10.6H10V16.2M-10.1 9.9L16.7 -16.3" stroke-width="3.1"/></g></svg>
<span class="t" style="left:52.70px;top:13.12px;font-size:24.42px;color:#5c6777;transform:scaleX(0.9342);">Crop</span>
</div>
<div class="a btn" style="left:2113px;top:321px;width:151px;height:54px">
<svg style="left:4.00px;top:2.00px" width="44" height="44" viewBox="-22.0 -22.0 44 44"><g fill="none" stroke="#000" stroke-width="3.2" stroke-linecap="round" stroke-linejoin="round"><path d="M-3.2 -14.6V15.9H-15.6Z" stroke-width="1.7" stroke-linejoin="miter"/><path d="M1.3 -16.2V16.8H16.7Z" fill="#000" stroke="none"/></g></svg>
<span class="t" style="left:52.40px;top:13.12px;font-size:24.42px;color:#5c6777;transform:scaleX(0.9226);">Flip H</span>
</div>
<div class="a btn" style="left:2278px;top:321px;width:151px;height:54px">
<svg style="left:4.00px;top:2.00px" width="44" height="44" viewBox="-22.0 -22.0 44 44"><g fill="none" stroke="#000" stroke-width="3.2" stroke-linecap="round" stroke-linejoin="round"><path d="M-16.6 -1.1L16.4 -16.5V-1.1Z" fill="#000" stroke="none"/><path d="M-14 3.4H15.6V15.4Z" stroke-width="1.7" stroke-linejoin="miter"/></g></svg>
<span class="t" style="left:53.30px;top:13.12px;font-size:24.42px;color:#5c6777;transform:scaleX(0.9296);">Flip V</span>
</div>
<div class="a btn" style="left:1783px;top:449px;width:316px;height:54px">
<svg style="left:3.90px;top:2.65px" width="44" height="44" viewBox="-22.0 -22.0 44 44"><g fill="none" stroke="#000" stroke-width="3.2" stroke-linecap="round" stroke-linejoin="round"><circle r="16.1" stroke-width="3.3"/><path d="M-14.0 -8.1L3.36 -8.1" stroke-width="2.9" stroke-linecap="butt" transform="rotate(0)"/><path d="M-14.0 -8.1L3.36 -8.1" stroke-width="2.9" stroke-linecap="butt" transform="rotate(45)"/><path d="M-14.0 -8.1L3.36 -8.1" stroke-width="2.9" stroke-linecap="butt" transform="rotate(90)"/><path d="M-14.0 -8.1L3.36 -8.1" stroke-width="2.9" stroke-linecap="butt" transform="rotate(135)"/><path d="M-14.0 -8.1L3.36 -8.1" stroke-width="2.9" stroke-linecap="butt" transform="rotate(180)"/><path d="M-14.0 -8.1L3.36 -8.1" stroke-width="2.9" stroke-linecap="butt" transform="rotate(225)"/><path d="M-14.0 -8.1L3.36 -8.1" stroke-width="2.9" stroke-linecap="butt" transform="rotate(270)"/><path d="M-14.0 -8.1L3.36 -8.1" stroke-width="2.9" stroke-linecap="butt" transform="rotate(315)"/></g></svg>
<span class="t" style="left:53.40px;top:13.12px;font-size:24.42px;color:#5c6777;transform:scaleX(0.9634);">Exposure auto correction</span>
</div>
<div class="a btn" style="left:2113px;top:449px;width:316px;height:54px">
<svg style="left:3.90px;top:2.80px" width="44" height="44" viewBox="-22.0 -22.0 44 44"><g fill="none" stroke="#000" stroke-width="3.2" stroke-linecap="round" stroke-linejoin="round"><circle r="9.7" stroke-width="3.3"/><path d="M0 -9.7A9.7 9.7 0 0 1 0 9.7Z" fill="#000" stroke="none"/><path d="M14.30 0.00L16.80 0.00" stroke-width="3.1"/><path d="M10.11 10.11L12.94 12.94" stroke-width="3.1"/><path d="M0.00 14.30L0.00 16.80" stroke-width="3.1"/><path d="M-10.11 10.11L-12.94 12.94" stroke-width="3.1"/><path d="M-14.30 0.00L-16.80 0.00" stroke-width="3.1"/><path d="M-10.11 -10.11L-12.94 -12.94" stroke-width="3.1"/><path d="M-0.00 -14.30L-0.00 -16.80" stroke-width="3.1"/><path d="M10.11 -10.11L12.94 -12.94" stroke-width="3.1"/></g></svg>
<span class="t" style="left:53.10px;top:13.12px;font-size:24.42px;color:#5c6777;transform:scaleX(0.9683);">Brightness/Contrast</span>
</div>
<div class="a btn" style="left:1783px;top:517px;width:316px;height:54px">
<svg style="left:4.10px;top:2.40px" width="44" height="44" viewBox="-22.0 -22.0 44 44"><g fill="none" stroke="#000" stroke-width="3.2" stroke-linecap="round" stroke-linejoin="round"><path d="M-16.4 -15.5V16.2H15.5" stroke-width="3.2"/><path d="M-12 15.9C-6.6 15.9 -7 -12.6 0 -12.6C7 -12.6 6.6 15.9 12 15.9" stroke-width="3.1"/></g></svg>
<span class="t" style="left:52.40px;top:13.12px;font-size:24.42px;color:#5c6777;transform:scaleX(0.9838);">Tonal correction</span>
</div>
<div class="a btn" style="left:2113px;top:517px;width:316px;height:54px">
<svg style="left:3.90px;top:1.50px" width="44" height="44" viewBox="-22.0 -22.0 44 44"><g fill="none" stroke="#000" stroke-width="3.2" stroke-linecap="round" stroke-linejoin="round"><path d="M-12.5 -15L0 0.6L12.5 -15M0 0.6V17.2" stroke-width="3.3"/></g></svg>
<span class="t" style="left:52.40px;top:13.12px;font-size:24.42px;color:#5c6777;transform:scaleX(0.9704);">Gamma correction</span>
</div>
<div class="a btn" style="left:1783px;top:645px;width:316px;height:54px">
<svg style="left:3.90px;top:2.65px" width="44" height="44" viewBox="-22.0 -22.0 44 44"><g fill="none" stroke="#000" stroke-width="3.2" stroke-linecap="round" stroke-linejoin="round"><circle r="16.1" stroke-width="3.3"/><path d="M3.66 -14.55C6.5 -12.5 6.8 -9 4.6 -6.5L0.5 -1.4L-4 3.65C-6 6 -6.2 9.5 -4.6 11.6C-3.7 13 -2.8 14 -1.71 14.9A15 15 0 0 0 3.66 -14.55Z" fill="#000" stroke="#000" stroke-width="1.2"/></g></svg>
<span class="t" style="left:52.40px;top:13.12px;font-size:24.42px;color:#5c6777;transform:scaleX(0.9838);">Color correction</span>
</div>
<div class="a btn" style="left:2113px;top:645px;width:316px;height:54px">
<svg style="left:3.90px;top:2.65px" width="44" height="44" viewBox="-22.0 -22.0 44 44"><g fill="none" stroke="#000" stroke-width="3.2" stroke-linecap="round" stroke-linejoin="round"><path d="M-15.9 -1.4C-16.2 3.5 -13.5 7 -10.5 7.2C-8 7.3 -7.3 5.2 -7.7 3.3C-7.9 2 -6.5 1.6 -5.2 2.5C-3 4 -1.8 6 -2.6 7.4C-3.4 8.6 -5.5 8.8 -6.3 9.8C-7.4 11.2 -6.3 13 -4.6 14.2C-3.2 15.2 -1.5 16 0.3 16A16.1 16.1 0 1 0 -15.9 -1.4Z" stroke-width="3.2"/><circle cx="-7.9" cy="-5.9" r="2.4" fill="#000" stroke="none"/><circle cx="-1" cy="-9.8" r="2.4" fill="#000" stroke="none"/><circle cx="7" cy="-6.8" r="2.4" fill="#000" stroke="none"/><circle cx="10" cy="1.1" r="2.4" fill="#000" stroke="none"/><circle cx="5.9" cy="8.1" r="2.4" fill="#000" stroke="none"/></g></svg>
<span class="t" style="left:52.50px;top:13.12px;font-size:24.42px;color:#5c6777;transform:scaleX(0.9563);">Colorize</span>
</div>
<div class="a btn" style="left:2031px;top:737px;width:149px;height:54px">
<svg style="left:-2px;top:-2px" width="149" height="54" viewBox="2031 737 149 54"><g fill="none" stroke="#000" stroke-linecap="round" stroke-linejoin="round"><path d="M2065.9 747.7L2052.8 759.6L2065.9 772.2M2053.5 759.6H2076.5C2082.5 759.6 2085.3 762.6 2085.3 768V780.5" stroke-width="3.2"/></g></svg>
<span class="t" style="left:73.60px;top:13.12px;font-size:24.42px;color:#5c6777;transform:scaleX(0.8661);">Reset</span>
</div>
<div class="a" style="left:1772px;top:831px;width:6px;height:1px;background:#7d8794"></div>
<div class="a" style="left:1776px;top:831px;width:96px;height:53px;border:1px solid #8892a0;border-top:none;border-bottom:4px solid #ad272b;border-radius:0 0 7px 7px;background:#e4ecf9"></div>
<div class="a" style="left:1872px;top:831px;width:568px;height:1px;background:#7d8794"></div>
<div class="a" style="left:1872px;top:832px;width:113px;height:52px;border:1px solid #aab4c2;border-top:1px solid #7d8794;border-radius:0 0 7px 7px;background:linear-gradient(#b9c4d2 0,#cfd8e5 10px,#cfd8e5 100%)"></div>
<span class="t" style="left:1797.00px;top:846.62px;font-size:24.42px;color:#1c2739;transform:scaleX(0.9558);">Tools</span>
<span class="t" style="left:1894.70px;top:846.62px;font-size:24.42px;color:#1c2739;transform:scaleX(0.9282);">Effects</span>
<div class="a btn" style="left:24px;top:1467px;width:138px;height:52px"></div>
<span class="t" style="left:45.60px;top:1481.12px;font-size:24.42px;color:#4b5565;transform:scaleX(0.8550);">Save as...</span>
<div class="a btn" style="left:1948px;top:1467px;width:242px;height:52px"></div>
<span class="t" style="left:2052.40px;top:1481.12px;font-size:24.42px;color:#4b5565;transform:scaleX(0.8899);">OK</span>
<div class="a btn" style="left:2202px;top:1467px;width:242px;height:52px"></div>
<span class="t" style="left:2287.80px;top:1481.12px;font-size:24.42px;color:#4b5565;transform:scaleX(0.9098);">Cancel</span>
</body></html>
